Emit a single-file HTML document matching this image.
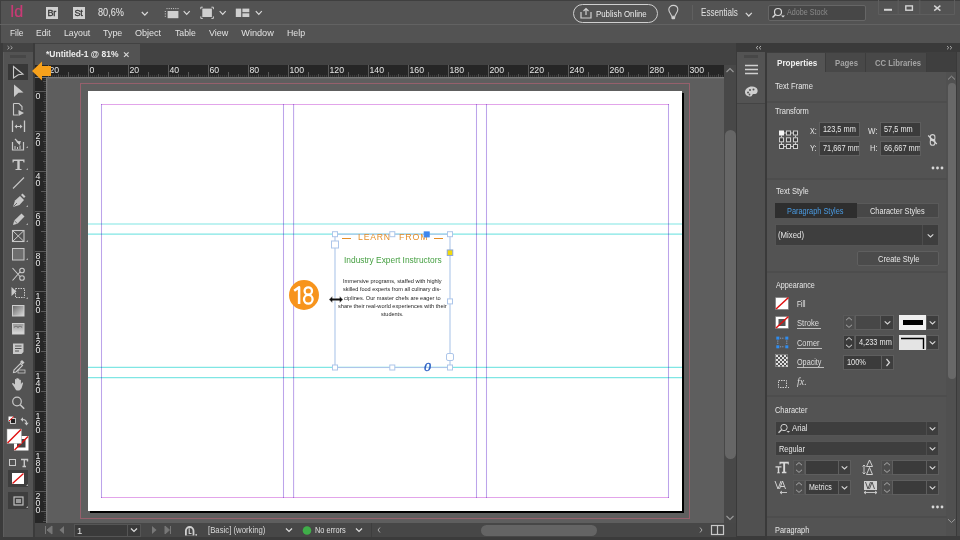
<!DOCTYPE html>
<html><head><meta charset="utf-8">
<style>
*{margin:0;padding:0;box-sizing:border-box}
html,body{width:960px;height:540px;overflow:hidden;background:#3a3a3a;font-family:"Liberation Sans",sans-serif;color:#e0e0e0;position:relative}
.a{position:absolute}
.t{position:absolute;white-space:nowrap;line-height:1}
.u{transform:scaleX(0.85);transform-origin:0 0}
svg{overflow:visible}
</style></head><body>
<div class="a" style="left:0;top:0;width:960px;height:25px;background:#535353;border-top:1px solid #3f3f3f;border-left:1px solid #3f3f3f"></div>
<div class="a" style="left:0;top:24px;width:960px;height:1px;background:#626262"></div>
<div class="a" style="left:0;top:25px;width:960px;height:18px;background:#535353;border-left:1px solid #3f3f3f"></div>
<div class="t" style="left:10px;top:4px;font-size:16px;font-weight:normal;color:#c93b76;letter-spacing:-0.2px;-webkit-text-stroke:0.2px #c93b76">Id</div>
<div class="a" style="left:46px;top:7px;width:12px;height:12px;background:#d0d0d0"></div>
<div class="t" style="left:47.5px;top:9px;font-size:9px;font-weight:normal;color:#333;letter-spacing:-0.2px;-webkit-text-stroke:0.3px #333">Br</div>
<div class="a" style="left:73px;top:7px;width:12px;height:12px;background:#d0d0d0"></div>
<div class="t" style="left:74.5px;top:9px;font-size:9px;font-weight:normal;color:#333;letter-spacing:-0.2px;-webkit-text-stroke:0.3px #333">St</div>
<div class="t" style="left:97.50px;top:8.14px;font-size:10.47px;font-weight:normal;color:#e8e8e8;font-family:'Liberation Sans';font-style:normal;transform:scaleX(0.876);transform-origin:0 0;">80,6%</div>
<svg class="a" style="left:0;top:0" width="960" height="30"><path d="M141.8,12L144.8,15.2L147.8,12" fill="none" stroke="#d8d8d8" stroke-width="1.2"/><path d="M183.7,11.2L186.7,14.399999999999999L189.7,11.2" fill="none" stroke="#d8d8d8" stroke-width="1.2"/><path d="M219.7,11.2L222.7,14.399999999999999L225.7,11.2" fill="none" stroke="#d8d8d8" stroke-width="1.2"/><path d="M255.8,11.2L258.8,14.399999999999999L261.8,11.2" fill="none" stroke="#d8d8d8" stroke-width="1.2"/><path d="M745.8,12.8L748.8,16.0L751.8,12.8" fill="none" stroke="#d8d8d8" stroke-width="1.2"/><rect x="167.6" y="11" width="10.8" height="7.2" fill="#cfcfcf"/><path d="M166.5,8.6H178.5" stroke="#cfcfcf" stroke-width="1" stroke-dasharray="1,1.2"/><path d="M165.3,11V18" stroke="#cfcfcf" stroke-width="1" stroke-dasharray="1,1.4"/><rect x="202.3" y="8.6" width="9.6" height="8.4" fill="#cfcfcf"/><path d="M200.8,9.2V7.2H202.8M211.4,7.2H213.4V9.2M213.4,16.4V18.4H211.4M202.8,18.4H200.8V16.4" fill="none" stroke="#cfcfcf" stroke-width="1"/><rect x="235.8" y="8.6" width="5.4" height="8.4" fill="#cfcfcf"/><rect x="242.4" y="8.6" width="6.9" height="3.6" fill="#cfcfcf"/><rect x="242.4" y="13.3" width="6.9" height="3.7" fill="#cfcfcf"/></svg>
<div class="a" style="left:573px;top:4px;width:85px;height:19px;border:1.3px solid #cfcfcf;border-radius:10px"></div>
<svg class="a" style="left:580px;top:7px" width="13" height="12"><path d="M1,5V11H11V5" fill="none" stroke="#d0d0d0" stroke-width="1.2"/><path d="M6,8V1.5M3.5,4L6,1.5L8.5,4" fill="none" stroke="#d0d0d0" stroke-width="1.2"/></svg>
<div class="t" style="left:595.80px;top:8.86px;font-size:9.74px;font-weight:normal;color:#ececec;font-family:'Liberation Sans';font-style:normal;transform:scaleX(0.807);transform-origin:0 0;">Publish Online</div>
<svg class="a" style="left:0;top:0" width="960" height="30"><path d="M671.6,16.2C671.4,14 668.8,12.6 668.8,9.6C668.8,7.1 670.8,5.4 673.3,5.4C675.8,5.4 677.8,7.1 677.8,9.6C677.8,12.6 675.2,14 675,16.2Z" fill="none" stroke="#cfcfcf" stroke-width="1.1"/><rect x="671.5" y="16.4" width="3.6" height="2.8" rx="0.8" fill="#cfcfcf"/></svg>
<div class="a" style="left:692px;top:5px;width:1px;height:15px;background:#606060"></div>
<div class="t" style="left:701.25px;top:7.81px;font-size:10.03px;font-weight:normal;color:#e0e0e0;font-family:'Liberation Sans';font-style:normal;transform:scaleX(0.807);transform-origin:0 0;">Essentials</div>
<div class="a" style="left:768px;top:5px;width:98px;height:16px;background:#474747;border:1px solid #666;border-radius:2px"></div>
<svg class="a" style="left:771px;top:7px" width="16" height="12"><circle cx="7" cy="5" r="3.5" fill="none" stroke="#d8d8d8" stroke-width="1.2"/><path d="M4.5,7.5L1.5,10.5" stroke="#d8d8d8" stroke-width="1.5"/><path d="M10,8.5h4l-2,2z" fill="#d8d8d8"/></svg>
<div class="t" style="left:787.00px;top:7.97px;font-size:9.01px;font-weight:normal;color:#8a8a8a;font-family:'Liberation Sans';font-style:normal;transform:scaleX(0.796);transform-origin:0 0;">Adobe Stock</div>
<svg class="a" style="left:0;top:0" width="960" height="30"><path d="M878.5,0V14.5H954.5V0M898.2,0V14.5M919.8,0V14.5" fill="none" stroke="#5e5e5e" stroke-width="1"/><rect x="884" y="8.8" width="8" height="2" fill="#d4d4d4"/><rect x="905.8" y="5.9" width="6.6" height="4.3" fill="none" stroke="#d4d4d4" stroke-width="1.4"/><path d="M934.2,5.6L940.4,10.6M940.4,5.6L934.2,10.6" stroke="#d4d4d4" stroke-width="1.4"/></svg>
<div class="t" style="left:9.60px;top:28.55px;font-size:9.16px;font-weight:normal;color:#e2e2e2;font-family:'Liberation Sans';font-style:normal;transform:scaleX(0.916);transform-origin:0 0;">File</div>
<div class="t" style="left:35.90px;top:28.55px;font-size:9.16px;font-weight:normal;color:#e2e2e2;font-family:'Liberation Sans';font-style:normal;transform:scaleX(0.924);transform-origin:0 0;">Edit</div>
<div class="t" style="left:63.50px;top:28.55px;font-size:9.16px;font-weight:normal;color:#e2e2e2;font-family:'Liberation Sans';font-style:normal;transform:scaleX(0.956);transform-origin:0 0;">Layout</div>
<div class="t" style="left:103.10px;top:28.55px;font-size:9.16px;font-weight:normal;color:#e2e2e2;font-family:'Liberation Sans';font-style:normal;transform:scaleX(0.971);transform-origin:0 0;">Type</div>
<div class="t" style="left:135.40px;top:28.55px;font-size:9.16px;font-weight:normal;color:#e2e2e2;font-family:'Liberation Sans';font-style:normal;transform:scaleX(0.986);transform-origin:0 0;">Object</div>
<div class="t" style="left:175.00px;top:28.55px;font-size:9.16px;font-weight:normal;color:#e2e2e2;font-family:'Liberation Sans';font-style:normal;transform:scaleX(0.950);transform-origin:0 0;">Table</div>
<div class="t" style="left:208.75px;top:28.55px;font-size:9.16px;font-weight:normal;color:#e2e2e2;font-family:'Liberation Sans';font-style:normal;transform:scaleX(0.983);transform-origin:0 0;">View</div>
<div class="t" style="left:241.25px;top:28.55px;font-size:9.16px;font-weight:normal;color:#e2e2e2;font-family:'Liberation Sans';font-style:normal;">Window</div>
<div class="t" style="left:286.90px;top:28.55px;font-size:9.16px;font-weight:normal;color:#e2e2e2;font-family:'Liberation Sans';font-style:normal;transform:scaleX(0.962);transform-origin:0 0;">Help</div>
<div class="a" style="left:0;top:43px;width:35px;height:497px;background:#3b3b3b"></div>
<div class="a" style="left:3px;top:43px;width:30px;height:9px;background:#434343"></div>
<svg class="a" style="left:0;top:0" width="40" height="60"><path d="M7.5,46L9.3,47.7L7.5,49.4M10.5,46L12.3,47.7L10.5,49.4" fill="none" stroke="#b0b0b0" stroke-width="0.9"/></svg>
<div class="a" style="left:3px;top:52px;width:30px;height:488px;background:#535353;border-left:1px solid #5d5d5d"></div>
<div class="a" style="left:10px;top:55px;width:16px;height:3px;background:#474747"></div>
<div class="a" style="left:8px;top:64px;width:20px;height:16px;background:#383838"></div>
<div class="a" style="left:8px;top:470px;width:20px;height:17px;background:#3e3e3e"></div>
<div class="a" style="left:8px;top:492px;width:20px;height:17px;background:#3e3e3e"></div>
<svg class="a" style="left:0;top:0" width="36" height="540"><path d="M13.5,66.5L23,74.2L18.3,74.8L13.5,78Z" fill="none" stroke="#c9c9c9" stroke-width="1.1"/><path d="M14,84.5L23.5,92.5L18.5,92.8L14,97Z" fill="#c9c9c9"/><path d="M13.5,103.5H19L22,106.5V110M13.5,103.5V115H18" fill="none" stroke="#c9c9c9" stroke-width="1.1"/><path d="M18.5,110V116L24,113Z" fill="#c9c9c9"/><path d="M12.5,120.5V132M24.5,120.5V132" stroke="#c9c9c9" stroke-width="1.3"/><path d="M15,126.5H22" stroke="#c9c9c9" stroke-width="1"/><path d="M14.5,126.5L17,124.5V128.5ZM22.5,126.5L20,124.5V128.5Z" fill="#c9c9c9"/><path d="M12.5,142V150H23.5V142" fill="none" stroke="#c9c9c9" stroke-width="1.2"/><path d="M15,139L20,144" stroke="#c9c9c9" stroke-width="1.2"/><path d="M19.5,145L21,141L16,141.5Z" fill="#c9c9c9"/><path d="M15,146V149M17.5,147V149M20,145.5V149" stroke="#c9c9c9" stroke-width="1"/><path d="M26,148L28,146V148Z" fill="#aaa"/><path d="M12.5,159.5H24.5V162.5H23.5L23,161H19.7V169H21.5V170H15.5V169H17.3V161H14L13.5,162.5H12.5Z" fill="#c9c9c9"/><path d="M26,170L28,168V170Z" fill="#aaa"/><path d="M13,188.5L24,177.5" stroke="#c9c9c9" stroke-width="1.1"/><path d="M13,207L15,200.5L20,196L24,200L19.5,205Z" fill="#c9c9c9"/><path d="M21,195L22.5,193.5L25.5,196.5L24,198Z" fill="#c9c9c9"/><path d="M13.5,206.5L17,203" stroke="#535353" stroke-width="0.8"/><path d="M26,207L28,205V207Z" fill="#aaa"/><path d="M13,225L14.2,220.5L21.5,213.5L24.5,216.5L17.5,223.8Z" fill="#c9c9c9"/><path d="M14.2,220.5L17.5,223.8" stroke="#535353" stroke-width="0.7"/><path d="M26,225L28,223V225Z" fill="#aaa"/><rect x="12.5" y="230.5" width="11.5" height="11" fill="none" stroke="#c9c9c9" stroke-width="1.1"/><path d="M12.5,230.5L24,241.5M24,230.5L12.5,241.5" stroke="#c9c9c9" stroke-width="1"/><path d="M26,242L28,240V242Z" fill="#aaa"/><rect x="12.5" y="248.5" width="11.5" height="11.5" fill="#6e6e6e" stroke="#c9c9c9" stroke-width="1"/><path d="M26,260L28,258V260Z" fill="#aaa"/><circle cx="22" cy="270.5" r="2.3" fill="none" stroke="#c9c9c9" stroke-width="1.1"/><circle cx="22" cy="278" r="2.3" fill="none" stroke="#c9c9c9" stroke-width="1.1"/><path d="M12.5,268L20,276.5M12.5,280.5L20,272" stroke="#c9c9c9" stroke-width="1.1"/><path d="M11.5,287V296L16.5,291.5Z" fill="#c9c9c9"/><rect x="15.5" y="288.5" width="9" height="9" fill="none" stroke="#c9c9c9" stroke-width="1" stroke-dasharray="1.5,1"/><path d="M26,299L28,297V299Z" fill="#aaa"/><defs><linearGradient id="g1" x1="0" y1="0" x2="1" y2="1"><stop offset="0" stop-color="#666"/><stop offset="1" stop-color="#ddd"/></linearGradient><linearGradient id="g2" x1="0" y1="0" x2="0" y2="1"><stop offset="0" stop-color="#999"/><stop offset="1" stop-color="#ddd"/></linearGradient></defs><rect x="12.5" y="305.5" width="11.5" height="10.5" fill="url(#g1)" stroke="#cfcfcf" stroke-width="1"/><rect x="12.5" y="323.5" width="11.5" height="10.5" fill="url(#g2)" stroke="#cfcfcf" stroke-width="1"/><path d="M14,327.5Q16,325 18,327.5Q20,325 22,327.5" fill="none" stroke="#777" stroke-width="1.2"/><path d="M13,343.5H23.5V352L21.5,354H13Z" fill="#c9c9c9"/><path d="M15,346H21.5M15,348.5H21.5M15,351H19" stroke="#535353" stroke-width="1"/><path d="M13.5,372.5L14,370L20.5,363.5L22.5,365.5L16,372Z" fill="none" stroke="#c9c9c9" stroke-width="1.1"/><path d="M20,362L22,360L24.5,362.5L22.5,364.5Z" fill="#c9c9c9"/><rect x="18" y="370" width="7" height="3" fill="none" stroke="#c9c9c9" stroke-width="0.8"/><path d="M14.5,387.5L12.3,384.2C11.8,383.4 12.6,382.6 13.4,383.2L15,384.6V379.8C15,378.9 16.4,378.9 16.4,379.8V383.5V378.6C16.4,377.7 17.9,377.7 17.9,378.6V383.5V379.1C17.9,378.2 19.4,378.2 19.4,379.1V383.8V380.3C19.4,379.5 20.9,379.5 20.9,380.3V384.5L21.6,383C22,382.2 23.3,382.6 23,383.5L21.8,387.5C21.2,389.5 19.8,390.6 18,390.6H17C16,390.6 15.2,389 14.5,387.5Z" fill="#c9c9c9"/><circle cx="17" cy="401.5" r="4.3" fill="none" stroke="#c9c9c9" stroke-width="1.2"/><path d="M20.2,404.8L24.2,408.8" stroke="#c9c9c9" stroke-width="1.6"/><rect x="8.5" y="416.5" width="5" height="5" fill="#fff"/><rect x="10.5" y="418.5" width="5" height="5" fill="#222" stroke="#eee" stroke-width="0.8"/><path d="M9,421L14,416.5" stroke="#e00" stroke-width="1"/><path d="M22.5,419.5C25,419.5 26.5,420.5 26.5,423" fill="none" stroke="#c9c9c9" stroke-width="1.1"/><path d="M20.5,419.5L23,417.3V421.7ZM26.5,425.5L24.3,422.8H28.7Z" fill="#c9c9c9"/><rect x="14" y="436" width="14.5" height="14.5" fill="#fff"/><rect x="17" y="439" width="8.5" height="8.5" fill="#444"/><path d="M14.5,450L28,436.5" stroke="#e01010" stroke-width="1.4"/><rect x="7" y="429" width="14.5" height="14.5" fill="#fff" stroke="#999" stroke-width="0.5"/><path d="M7.5,443L21,429.5" stroke="#e01010" stroke-width="1.4"/><rect x="9.5" y="459.5" width="6" height="6" fill="none" stroke="#c9c9c9" stroke-width="1"/><path d="M21,459.5H27.5V461.5M24.3,459.5V466.5M22.5,466.5H26" fill="none" stroke="#c9c9c9" stroke-width="1.4"/><rect x="12" y="473" width="12" height="11" fill="#fff"/><path d="M12.5,483.5L23.5,473.5" stroke="#e01010" stroke-width="1.3"/><path d="M26,486L28,484V486Z" fill="#aaa"/><rect x="14" y="497" width="9" height="8" fill="none" stroke="#c0c0c0" stroke-width="1.2"/><rect x="16" y="499" width="5" height="4" fill="#9a9a9a"/><path d="M26,508L28,506V508Z" fill="#aaa"/></svg>
<div class="a" style="left:35px;top:43px;width:701px;height:22px;background:#424242"></div>
<div class="a" style="left:35px;top:44px;width:105px;height:21px;background:#535353"></div>
<div class="t" style="left:46.00px;top:50.37px;font-size:9.01px;font-weight:bold;color:#ececec;font-family:'Liberation Sans';font-style:normal;transform:scaleX(0.944);transform-origin:0 0;">*Untitled-1 @ 81%</div>
<svg class="a" style="left:0;top:0" width="200" height="70"><path d="M124,52.3L128.6,56.8M128.6,52.3L124,56.8" stroke="#d8d8d8" stroke-width="1.15"/></svg>
<svg class="a" style="left:0;top:0" width="736" height="540"><rect x="35" y="65" width="689" height="12" fill="#262626"/><rect x="35" y="77" width="11" height="446" fill="#262626"/><rect x="35" y="77" width="689" height="1" fill="#787878"/><rect x="46" y="77" width="1" height="446" fill="#787878"/><rect x="48.0" y="65" width="1" height="12" fill="#5a5a5a"/><rect x="50.0" y="75" width="1" height="2" fill="#3c3c3c"/><rect x="52.0" y="75" width="1" height="2" fill="#3c3c3c"/><rect x="54.0" y="75" width="1" height="2" fill="#3c3c3c"/><rect x="56.0" y="75" width="1" height="2" fill="#3c3c3c"/><rect x="58.0" y="74" width="1" height="3" fill="#505050"/><rect x="60.0" y="75" width="1" height="2" fill="#3c3c3c"/><rect x="62.0" y="75" width="1" height="2" fill="#3c3c3c"/><rect x="64.0" y="75" width="1" height="2" fill="#3c3c3c"/><rect x="66.0" y="75" width="1" height="2" fill="#3c3c3c"/><rect x="68.0" y="72" width="1" height="5" fill="#5a5a5a"/><rect x="70.0" y="75" width="1" height="2" fill="#3c3c3c"/><rect x="72.0" y="75" width="1" height="2" fill="#3c3c3c"/><rect x="74.0" y="75" width="1" height="2" fill="#3c3c3c"/><rect x="76.0" y="75" width="1" height="2" fill="#3c3c3c"/><rect x="78.0" y="74" width="1" height="3" fill="#505050"/><rect x="80.0" y="75" width="1" height="2" fill="#3c3c3c"/><rect x="82.0" y="75" width="1" height="2" fill="#3c3c3c"/><rect x="84.0" y="75" width="1" height="2" fill="#3c3c3c"/><rect x="86.0" y="75" width="1" height="2" fill="#3c3c3c"/><rect x="88.0" y="65" width="1" height="12" fill="#5a5a5a"/><rect x="90.0" y="75" width="1" height="2" fill="#3c3c3c"/><rect x="92.0" y="75" width="1" height="2" fill="#3c3c3c"/><rect x="94.0" y="75" width="1" height="2" fill="#3c3c3c"/><rect x="96.0" y="75" width="1" height="2" fill="#3c3c3c"/><rect x="98.0" y="74" width="1" height="3" fill="#505050"/><rect x="100.0" y="75" width="1" height="2" fill="#3c3c3c"/><rect x="102.0" y="75" width="1" height="2" fill="#3c3c3c"/><rect x="104.0" y="75" width="1" height="2" fill="#3c3c3c"/><rect x="106.0" y="75" width="1" height="2" fill="#3c3c3c"/><rect x="108.0" y="72" width="1" height="5" fill="#5a5a5a"/><rect x="110.0" y="75" width="1" height="2" fill="#3c3c3c"/><rect x="112.0" y="75" width="1" height="2" fill="#3c3c3c"/><rect x="114.0" y="75" width="1" height="2" fill="#3c3c3c"/><rect x="116.0" y="75" width="1" height="2" fill="#3c3c3c"/><rect x="118.0" y="74" width="1" height="3" fill="#505050"/><rect x="120.0" y="75" width="1" height="2" fill="#3c3c3c"/><rect x="122.0" y="75" width="1" height="2" fill="#3c3c3c"/><rect x="124.0" y="75" width="1" height="2" fill="#3c3c3c"/><rect x="126.0" y="75" width="1" height="2" fill="#3c3c3c"/><rect x="128.0" y="65" width="1" height="12" fill="#5a5a5a"/><rect x="130.0" y="75" width="1" height="2" fill="#3c3c3c"/><rect x="132.0" y="75" width="1" height="2" fill="#3c3c3c"/><rect x="134.0" y="75" width="1" height="2" fill="#3c3c3c"/><rect x="136.0" y="75" width="1" height="2" fill="#3c3c3c"/><rect x="138.0" y="74" width="1" height="3" fill="#505050"/><rect x="140.0" y="75" width="1" height="2" fill="#3c3c3c"/><rect x="142.0" y="75" width="1" height="2" fill="#3c3c3c"/><rect x="144.0" y="75" width="1" height="2" fill="#3c3c3c"/><rect x="146.0" y="75" width="1" height="2" fill="#3c3c3c"/><rect x="148.0" y="72" width="1" height="5" fill="#5a5a5a"/><rect x="150.0" y="75" width="1" height="2" fill="#3c3c3c"/><rect x="152.0" y="75" width="1" height="2" fill="#3c3c3c"/><rect x="154.0" y="75" width="1" height="2" fill="#3c3c3c"/><rect x="156.0" y="75" width="1" height="2" fill="#3c3c3c"/><rect x="158.0" y="74" width="1" height="3" fill="#505050"/><rect x="160.0" y="75" width="1" height="2" fill="#3c3c3c"/><rect x="162.0" y="75" width="1" height="2" fill="#3c3c3c"/><rect x="164.0" y="75" width="1" height="2" fill="#3c3c3c"/><rect x="166.0" y="75" width="1" height="2" fill="#3c3c3c"/><rect x="168.0" y="65" width="1" height="12" fill="#5a5a5a"/><rect x="170.0" y="75" width="1" height="2" fill="#3c3c3c"/><rect x="172.0" y="75" width="1" height="2" fill="#3c3c3c"/><rect x="174.0" y="75" width="1" height="2" fill="#3c3c3c"/><rect x="176.0" y="75" width="1" height="2" fill="#3c3c3c"/><rect x="178.0" y="74" width="1" height="3" fill="#505050"/><rect x="180.0" y="75" width="1" height="2" fill="#3c3c3c"/><rect x="182.0" y="75" width="1" height="2" fill="#3c3c3c"/><rect x="184.0" y="75" width="1" height="2" fill="#3c3c3c"/><rect x="186.0" y="75" width="1" height="2" fill="#3c3c3c"/><rect x="188.0" y="72" width="1" height="5" fill="#5a5a5a"/><rect x="190.0" y="75" width="1" height="2" fill="#3c3c3c"/><rect x="192.0" y="75" width="1" height="2" fill="#3c3c3c"/><rect x="194.0" y="75" width="1" height="2" fill="#3c3c3c"/><rect x="196.0" y="75" width="1" height="2" fill="#3c3c3c"/><rect x="198.0" y="74" width="1" height="3" fill="#505050"/><rect x="200.0" y="75" width="1" height="2" fill="#3c3c3c"/><rect x="202.0" y="75" width="1" height="2" fill="#3c3c3c"/><rect x="204.0" y="75" width="1" height="2" fill="#3c3c3c"/><rect x="206.0" y="75" width="1" height="2" fill="#3c3c3c"/><rect x="208.0" y="65" width="1" height="12" fill="#5a5a5a"/><rect x="210.0" y="75" width="1" height="2" fill="#3c3c3c"/><rect x="212.0" y="75" width="1" height="2" fill="#3c3c3c"/><rect x="214.0" y="75" width="1" height="2" fill="#3c3c3c"/><rect x="216.0" y="75" width="1" height="2" fill="#3c3c3c"/><rect x="218.0" y="74" width="1" height="3" fill="#505050"/><rect x="220.0" y="75" width="1" height="2" fill="#3c3c3c"/><rect x="222.0" y="75" width="1" height="2" fill="#3c3c3c"/><rect x="224.0" y="75" width="1" height="2" fill="#3c3c3c"/><rect x="226.0" y="75" width="1" height="2" fill="#3c3c3c"/><rect x="228.0" y="72" width="1" height="5" fill="#5a5a5a"/><rect x="230.0" y="75" width="1" height="2" fill="#3c3c3c"/><rect x="232.0" y="75" width="1" height="2" fill="#3c3c3c"/><rect x="234.0" y="75" width="1" height="2" fill="#3c3c3c"/><rect x="236.0" y="75" width="1" height="2" fill="#3c3c3c"/><rect x="238.0" y="74" width="1" height="3" fill="#505050"/><rect x="240.0" y="75" width="1" height="2" fill="#3c3c3c"/><rect x="242.0" y="75" width="1" height="2" fill="#3c3c3c"/><rect x="244.0" y="75" width="1" height="2" fill="#3c3c3c"/><rect x="246.0" y="75" width="1" height="2" fill="#3c3c3c"/><rect x="248.0" y="65" width="1" height="12" fill="#5a5a5a"/><rect x="250.0" y="75" width="1" height="2" fill="#3c3c3c"/><rect x="252.0" y="75" width="1" height="2" fill="#3c3c3c"/><rect x="254.0" y="75" width="1" height="2" fill="#3c3c3c"/><rect x="256.0" y="75" width="1" height="2" fill="#3c3c3c"/><rect x="258.0" y="74" width="1" height="3" fill="#505050"/><rect x="260.0" y="75" width="1" height="2" fill="#3c3c3c"/><rect x="262.0" y="75" width="1" height="2" fill="#3c3c3c"/><rect x="264.0" y="75" width="1" height="2" fill="#3c3c3c"/><rect x="266.0" y="75" width="1" height="2" fill="#3c3c3c"/><rect x="268.0" y="72" width="1" height="5" fill="#5a5a5a"/><rect x="270.0" y="75" width="1" height="2" fill="#3c3c3c"/><rect x="272.0" y="75" width="1" height="2" fill="#3c3c3c"/><rect x="274.0" y="75" width="1" height="2" fill="#3c3c3c"/><rect x="276.0" y="75" width="1" height="2" fill="#3c3c3c"/><rect x="278.0" y="74" width="1" height="3" fill="#505050"/><rect x="280.0" y="75" width="1" height="2" fill="#3c3c3c"/><rect x="282.0" y="75" width="1" height="2" fill="#3c3c3c"/><rect x="284.0" y="75" width="1" height="2" fill="#3c3c3c"/><rect x="286.0" y="75" width="1" height="2" fill="#3c3c3c"/><rect x="288.0" y="65" width="1" height="12" fill="#5a5a5a"/><rect x="290.0" y="75" width="1" height="2" fill="#3c3c3c"/><rect x="292.0" y="75" width="1" height="2" fill="#3c3c3c"/><rect x="294.0" y="75" width="1" height="2" fill="#3c3c3c"/><rect x="296.0" y="75" width="1" height="2" fill="#3c3c3c"/><rect x="298.0" y="74" width="1" height="3" fill="#505050"/><rect x="300.0" y="75" width="1" height="2" fill="#3c3c3c"/><rect x="302.0" y="75" width="1" height="2" fill="#3c3c3c"/><rect x="304.0" y="75" width="1" height="2" fill="#3c3c3c"/><rect x="306.0" y="75" width="1" height="2" fill="#3c3c3c"/><rect x="308.0" y="72" width="1" height="5" fill="#5a5a5a"/><rect x="310.0" y="75" width="1" height="2" fill="#3c3c3c"/><rect x="312.0" y="75" width="1" height="2" fill="#3c3c3c"/><rect x="314.0" y="75" width="1" height="2" fill="#3c3c3c"/><rect x="316.0" y="75" width="1" height="2" fill="#3c3c3c"/><rect x="318.0" y="74" width="1" height="3" fill="#505050"/><rect x="320.0" y="75" width="1" height="2" fill="#3c3c3c"/><rect x="322.0" y="75" width="1" height="2" fill="#3c3c3c"/><rect x="324.0" y="75" width="1" height="2" fill="#3c3c3c"/><rect x="326.0" y="75" width="1" height="2" fill="#3c3c3c"/><rect x="328.0" y="65" width="1" height="12" fill="#5a5a5a"/><rect x="330.0" y="75" width="1" height="2" fill="#3c3c3c"/><rect x="332.0" y="75" width="1" height="2" fill="#3c3c3c"/><rect x="334.0" y="75" width="1" height="2" fill="#3c3c3c"/><rect x="336.0" y="75" width="1" height="2" fill="#3c3c3c"/><rect x="338.0" y="74" width="1" height="3" fill="#505050"/><rect x="340.0" y="75" width="1" height="2" fill="#3c3c3c"/><rect x="342.0" y="75" width="1" height="2" fill="#3c3c3c"/><rect x="344.0" y="75" width="1" height="2" fill="#3c3c3c"/><rect x="346.0" y="75" width="1" height="2" fill="#3c3c3c"/><rect x="348.0" y="72" width="1" height="5" fill="#5a5a5a"/><rect x="350.0" y="75" width="1" height="2" fill="#3c3c3c"/><rect x="352.0" y="75" width="1" height="2" fill="#3c3c3c"/><rect x="354.0" y="75" width="1" height="2" fill="#3c3c3c"/><rect x="356.0" y="75" width="1" height="2" fill="#3c3c3c"/><rect x="358.0" y="74" width="1" height="3" fill="#505050"/><rect x="360.0" y="75" width="1" height="2" fill="#3c3c3c"/><rect x="362.0" y="75" width="1" height="2" fill="#3c3c3c"/><rect x="364.0" y="75" width="1" height="2" fill="#3c3c3c"/><rect x="366.0" y="75" width="1" height="2" fill="#3c3c3c"/><rect x="368.0" y="65" width="1" height="12" fill="#5a5a5a"/><rect x="370.0" y="75" width="1" height="2" fill="#3c3c3c"/><rect x="372.0" y="75" width="1" height="2" fill="#3c3c3c"/><rect x="374.0" y="75" width="1" height="2" fill="#3c3c3c"/><rect x="376.0" y="75" width="1" height="2" fill="#3c3c3c"/><rect x="378.0" y="74" width="1" height="3" fill="#505050"/><rect x="380.0" y="75" width="1" height="2" fill="#3c3c3c"/><rect x="382.0" y="75" width="1" height="2" fill="#3c3c3c"/><rect x="384.0" y="75" width="1" height="2" fill="#3c3c3c"/><rect x="386.0" y="75" width="1" height="2" fill="#3c3c3c"/><rect x="388.0" y="72" width="1" height="5" fill="#5a5a5a"/><rect x="390.0" y="75" width="1" height="2" fill="#3c3c3c"/><rect x="392.0" y="75" width="1" height="2" fill="#3c3c3c"/><rect x="394.0" y="75" width="1" height="2" fill="#3c3c3c"/><rect x="396.0" y="75" width="1" height="2" fill="#3c3c3c"/><rect x="398.0" y="74" width="1" height="3" fill="#505050"/><rect x="400.0" y="75" width="1" height="2" fill="#3c3c3c"/><rect x="402.0" y="75" width="1" height="2" fill="#3c3c3c"/><rect x="404.0" y="75" width="1" height="2" fill="#3c3c3c"/><rect x="406.0" y="75" width="1" height="2" fill="#3c3c3c"/><rect x="408.0" y="65" width="1" height="12" fill="#5a5a5a"/><rect x="410.0" y="75" width="1" height="2" fill="#3c3c3c"/><rect x="412.0" y="75" width="1" height="2" fill="#3c3c3c"/><rect x="414.0" y="75" width="1" height="2" fill="#3c3c3c"/><rect x="416.0" y="75" width="1" height="2" fill="#3c3c3c"/><rect x="418.0" y="74" width="1" height="3" fill="#505050"/><rect x="420.0" y="75" width="1" height="2" fill="#3c3c3c"/><rect x="422.0" y="75" width="1" height="2" fill="#3c3c3c"/><rect x="424.0" y="75" width="1" height="2" fill="#3c3c3c"/><rect x="426.0" y="75" width="1" height="2" fill="#3c3c3c"/><rect x="428.0" y="72" width="1" height="5" fill="#5a5a5a"/><rect x="430.0" y="75" width="1" height="2" fill="#3c3c3c"/><rect x="432.0" y="75" width="1" height="2" fill="#3c3c3c"/><rect x="434.0" y="75" width="1" height="2" fill="#3c3c3c"/><rect x="436.0" y="75" width="1" height="2" fill="#3c3c3c"/><rect x="438.0" y="74" width="1" height="3" fill="#505050"/><rect x="440.0" y="75" width="1" height="2" fill="#3c3c3c"/><rect x="442.0" y="75" width="1" height="2" fill="#3c3c3c"/><rect x="444.0" y="75" width="1" height="2" fill="#3c3c3c"/><rect x="446.0" y="75" width="1" height="2" fill="#3c3c3c"/><rect x="448.0" y="65" width="1" height="12" fill="#5a5a5a"/><rect x="450.0" y="75" width="1" height="2" fill="#3c3c3c"/><rect x="452.0" y="75" width="1" height="2" fill="#3c3c3c"/><rect x="454.0" y="75" width="1" height="2" fill="#3c3c3c"/><rect x="456.0" y="75" width="1" height="2" fill="#3c3c3c"/><rect x="458.0" y="74" width="1" height="3" fill="#505050"/><rect x="460.0" y="75" width="1" height="2" fill="#3c3c3c"/><rect x="462.0" y="75" width="1" height="2" fill="#3c3c3c"/><rect x="464.0" y="75" width="1" height="2" fill="#3c3c3c"/><rect x="466.0" y="75" width="1" height="2" fill="#3c3c3c"/><rect x="468.0" y="72" width="1" height="5" fill="#5a5a5a"/><rect x="470.0" y="75" width="1" height="2" fill="#3c3c3c"/><rect x="472.0" y="75" width="1" height="2" fill="#3c3c3c"/><rect x="474.0" y="75" width="1" height="2" fill="#3c3c3c"/><rect x="476.0" y="75" width="1" height="2" fill="#3c3c3c"/><rect x="478.0" y="74" width="1" height="3" fill="#505050"/><rect x="480.0" y="75" width="1" height="2" fill="#3c3c3c"/><rect x="482.0" y="75" width="1" height="2" fill="#3c3c3c"/><rect x="484.0" y="75" width="1" height="2" fill="#3c3c3c"/><rect x="486.0" y="75" width="1" height="2" fill="#3c3c3c"/><rect x="488.0" y="65" width="1" height="12" fill="#5a5a5a"/><rect x="490.0" y="75" width="1" height="2" fill="#3c3c3c"/><rect x="492.0" y="75" width="1" height="2" fill="#3c3c3c"/><rect x="494.0" y="75" width="1" height="2" fill="#3c3c3c"/><rect x="496.0" y="75" width="1" height="2" fill="#3c3c3c"/><rect x="498.0" y="74" width="1" height="3" fill="#505050"/><rect x="500.0" y="75" width="1" height="2" fill="#3c3c3c"/><rect x="502.0" y="75" width="1" height="2" fill="#3c3c3c"/><rect x="504.0" y="75" width="1" height="2" fill="#3c3c3c"/><rect x="506.0" y="75" width="1" height="2" fill="#3c3c3c"/><rect x="508.0" y="72" width="1" height="5" fill="#5a5a5a"/><rect x="510.0" y="75" width="1" height="2" fill="#3c3c3c"/><rect x="512.0" y="75" width="1" height="2" fill="#3c3c3c"/><rect x="514.0" y="75" width="1" height="2" fill="#3c3c3c"/><rect x="516.0" y="75" width="1" height="2" fill="#3c3c3c"/><rect x="518.0" y="74" width="1" height="3" fill="#505050"/><rect x="520.0" y="75" width="1" height="2" fill="#3c3c3c"/><rect x="522.0" y="75" width="1" height="2" fill="#3c3c3c"/><rect x="524.0" y="75" width="1" height="2" fill="#3c3c3c"/><rect x="526.0" y="75" width="1" height="2" fill="#3c3c3c"/><rect x="528.0" y="65" width="1" height="12" fill="#5a5a5a"/><rect x="530.0" y="75" width="1" height="2" fill="#3c3c3c"/><rect x="532.0" y="75" width="1" height="2" fill="#3c3c3c"/><rect x="534.0" y="75" width="1" height="2" fill="#3c3c3c"/><rect x="536.0" y="75" width="1" height="2" fill="#3c3c3c"/><rect x="538.0" y="74" width="1" height="3" fill="#505050"/><rect x="540.0" y="75" width="1" height="2" fill="#3c3c3c"/><rect x="542.0" y="75" width="1" height="2" fill="#3c3c3c"/><rect x="544.0" y="75" width="1" height="2" fill="#3c3c3c"/><rect x="546.0" y="75" width="1" height="2" fill="#3c3c3c"/><rect x="548.0" y="72" width="1" height="5" fill="#5a5a5a"/><rect x="550.0" y="75" width="1" height="2" fill="#3c3c3c"/><rect x="552.0" y="75" width="1" height="2" fill="#3c3c3c"/><rect x="554.0" y="75" width="1" height="2" fill="#3c3c3c"/><rect x="556.0" y="75" width="1" height="2" fill="#3c3c3c"/><rect x="558.0" y="74" width="1" height="3" fill="#505050"/><rect x="560.0" y="75" width="1" height="2" fill="#3c3c3c"/><rect x="562.0" y="75" width="1" height="2" fill="#3c3c3c"/><rect x="564.0" y="75" width="1" height="2" fill="#3c3c3c"/><rect x="566.0" y="75" width="1" height="2" fill="#3c3c3c"/><rect x="568.0" y="65" width="1" height="12" fill="#5a5a5a"/><rect x="570.0" y="75" width="1" height="2" fill="#3c3c3c"/><rect x="572.0" y="75" width="1" height="2" fill="#3c3c3c"/><rect x="574.0" y="75" width="1" height="2" fill="#3c3c3c"/><rect x="576.0" y="75" width="1" height="2" fill="#3c3c3c"/><rect x="578.0" y="74" width="1" height="3" fill="#505050"/><rect x="580.0" y="75" width="1" height="2" fill="#3c3c3c"/><rect x="582.0" y="75" width="1" height="2" fill="#3c3c3c"/><rect x="584.0" y="75" width="1" height="2" fill="#3c3c3c"/><rect x="586.0" y="75" width="1" height="2" fill="#3c3c3c"/><rect x="588.0" y="72" width="1" height="5" fill="#5a5a5a"/><rect x="590.0" y="75" width="1" height="2" fill="#3c3c3c"/><rect x="592.0" y="75" width="1" height="2" fill="#3c3c3c"/><rect x="594.0" y="75" width="1" height="2" fill="#3c3c3c"/><rect x="596.0" y="75" width="1" height="2" fill="#3c3c3c"/><rect x="598.0" y="74" width="1" height="3" fill="#505050"/><rect x="600.0" y="75" width="1" height="2" fill="#3c3c3c"/><rect x="602.0" y="75" width="1" height="2" fill="#3c3c3c"/><rect x="604.0" y="75" width="1" height="2" fill="#3c3c3c"/><rect x="606.0" y="75" width="1" height="2" fill="#3c3c3c"/><rect x="608.0" y="65" width="1" height="12" fill="#5a5a5a"/><rect x="610.0" y="75" width="1" height="2" fill="#3c3c3c"/><rect x="612.0" y="75" width="1" height="2" fill="#3c3c3c"/><rect x="614.0" y="75" width="1" height="2" fill="#3c3c3c"/><rect x="616.0" y="75" width="1" height="2" fill="#3c3c3c"/><rect x="618.0" y="74" width="1" height="3" fill="#505050"/><rect x="620.0" y="75" width="1" height="2" fill="#3c3c3c"/><rect x="622.0" y="75" width="1" height="2" fill="#3c3c3c"/><rect x="624.0" y="75" width="1" height="2" fill="#3c3c3c"/><rect x="626.0" y="75" width="1" height="2" fill="#3c3c3c"/><rect x="628.0" y="72" width="1" height="5" fill="#5a5a5a"/><rect x="630.0" y="75" width="1" height="2" fill="#3c3c3c"/><rect x="632.0" y="75" width="1" height="2" fill="#3c3c3c"/><rect x="634.0" y="75" width="1" height="2" fill="#3c3c3c"/><rect x="636.0" y="75" width="1" height="2" fill="#3c3c3c"/><rect x="638.0" y="74" width="1" height="3" fill="#505050"/><rect x="640.0" y="75" width="1" height="2" fill="#3c3c3c"/><rect x="642.0" y="75" width="1" height="2" fill="#3c3c3c"/><rect x="644.0" y="75" width="1" height="2" fill="#3c3c3c"/><rect x="646.0" y="75" width="1" height="2" fill="#3c3c3c"/><rect x="648.0" y="65" width="1" height="12" fill="#5a5a5a"/><rect x="650.0" y="75" width="1" height="2" fill="#3c3c3c"/><rect x="652.0" y="75" width="1" height="2" fill="#3c3c3c"/><rect x="654.0" y="75" width="1" height="2" fill="#3c3c3c"/><rect x="656.0" y="75" width="1" height="2" fill="#3c3c3c"/><rect x="658.0" y="74" width="1" height="3" fill="#505050"/><rect x="660.0" y="75" width="1" height="2" fill="#3c3c3c"/><rect x="662.0" y="75" width="1" height="2" fill="#3c3c3c"/><rect x="664.0" y="75" width="1" height="2" fill="#3c3c3c"/><rect x="666.0" y="75" width="1" height="2" fill="#3c3c3c"/><rect x="668.0" y="72" width="1" height="5" fill="#5a5a5a"/><rect x="670.0" y="75" width="1" height="2" fill="#3c3c3c"/><rect x="672.0" y="75" width="1" height="2" fill="#3c3c3c"/><rect x="674.0" y="75" width="1" height="2" fill="#3c3c3c"/><rect x="676.0" y="75" width="1" height="2" fill="#3c3c3c"/><rect x="678.0" y="74" width="1" height="3" fill="#505050"/><rect x="680.0" y="75" width="1" height="2" fill="#3c3c3c"/><rect x="682.0" y="75" width="1" height="2" fill="#3c3c3c"/><rect x="684.0" y="75" width="1" height="2" fill="#3c3c3c"/><rect x="686.0" y="75" width="1" height="2" fill="#3c3c3c"/><rect x="688.0" y="65" width="1" height="12" fill="#5a5a5a"/><rect x="690.0" y="75" width="1" height="2" fill="#3c3c3c"/><rect x="692.0" y="75" width="1" height="2" fill="#3c3c3c"/><rect x="694.0" y="75" width="1" height="2" fill="#3c3c3c"/><rect x="696.0" y="75" width="1" height="2" fill="#3c3c3c"/><rect x="698.0" y="74" width="1" height="3" fill="#505050"/><rect x="700.0" y="75" width="1" height="2" fill="#3c3c3c"/><rect x="702.0" y="75" width="1" height="2" fill="#3c3c3c"/><rect x="704.0" y="75" width="1" height="2" fill="#3c3c3c"/><rect x="706.0" y="75" width="1" height="2" fill="#3c3c3c"/><rect x="708.0" y="72" width="1" height="5" fill="#5a5a5a"/><rect x="710.0" y="75" width="1" height="2" fill="#3c3c3c"/><rect x="712.0" y="75" width="1" height="2" fill="#3c3c3c"/><rect x="714.0" y="75" width="1" height="2" fill="#3c3c3c"/><rect x="716.0" y="75" width="1" height="2" fill="#3c3c3c"/><rect x="718.0" y="74" width="1" height="3" fill="#505050"/><rect x="720.0" y="75" width="1" height="2" fill="#3c3c3c"/><rect x="722.0" y="75" width="1" height="2" fill="#3c3c3c"/><text x="49.5" y="73" font-size="8.7" fill="#e6e6e6" font-family="Liberation Sans">20</text><text x="89.5" y="73" font-size="8.7" fill="#e6e6e6" font-family="Liberation Sans">0</text><text x="129.5" y="73" font-size="8.7" fill="#e6e6e6" font-family="Liberation Sans">20</text><text x="169.5" y="73" font-size="8.7" fill="#e6e6e6" font-family="Liberation Sans">40</text><text x="209.5" y="73" font-size="8.7" fill="#e6e6e6" font-family="Liberation Sans">60</text><text x="249.5" y="73" font-size="8.7" fill="#e6e6e6" font-family="Liberation Sans">80</text><text x="289.5" y="73" font-size="8.7" fill="#e6e6e6" font-family="Liberation Sans">100</text><text x="329.5" y="73" font-size="8.7" fill="#e6e6e6" font-family="Liberation Sans">120</text><text x="369.5" y="73" font-size="8.7" fill="#e6e6e6" font-family="Liberation Sans">140</text><text x="409.5" y="73" font-size="8.7" fill="#e6e6e6" font-family="Liberation Sans">160</text><text x="449.5" y="73" font-size="8.7" fill="#e6e6e6" font-family="Liberation Sans">180</text><text x="489.5" y="73" font-size="8.7" fill="#e6e6e6" font-family="Liberation Sans">200</text><text x="529.5" y="73" font-size="8.7" fill="#e6e6e6" font-family="Liberation Sans">220</text><text x="569.5" y="73" font-size="8.7" fill="#e6e6e6" font-family="Liberation Sans">240</text><text x="609.5" y="73" font-size="8.7" fill="#e6e6e6" font-family="Liberation Sans">260</text><text x="649.5" y="73" font-size="8.7" fill="#e6e6e6" font-family="Liberation Sans">280</text><text x="689.5" y="73" font-size="8.7" fill="#e6e6e6" font-family="Liberation Sans">300</text><rect x="44" y="79.0" width="2" height="1" fill="#3c3c3c"/><rect x="43" y="81.0" width="3" height="1" fill="#505050"/><rect x="44" y="83.0" width="2" height="1" fill="#3c3c3c"/><rect x="44" y="85.0" width="2" height="1" fill="#3c3c3c"/><rect x="44" y="87.0" width="2" height="1" fill="#3c3c3c"/><rect x="44" y="89.0" width="2" height="1" fill="#3c3c3c"/><rect x="35" y="91.0" width="11" height="1" fill="#5a5a5a"/><rect x="44" y="93.0" width="2" height="1" fill="#3c3c3c"/><rect x="44" y="95.0" width="2" height="1" fill="#3c3c3c"/><rect x="44" y="97.0" width="2" height="1" fill="#3c3c3c"/><rect x="44" y="99.0" width="2" height="1" fill="#3c3c3c"/><rect x="43" y="101.0" width="3" height="1" fill="#505050"/><rect x="44" y="103.0" width="2" height="1" fill="#3c3c3c"/><rect x="44" y="105.0" width="2" height="1" fill="#3c3c3c"/><rect x="44" y="107.0" width="2" height="1" fill="#3c3c3c"/><rect x="44" y="109.0" width="2" height="1" fill="#3c3c3c"/><rect x="41" y="111.0" width="5" height="1" fill="#5a5a5a"/><rect x="44" y="113.0" width="2" height="1" fill="#3c3c3c"/><rect x="44" y="115.0" width="2" height="1" fill="#3c3c3c"/><rect x="44" y="117.0" width="2" height="1" fill="#3c3c3c"/><rect x="44" y="119.0" width="2" height="1" fill="#3c3c3c"/><rect x="43" y="121.0" width="3" height="1" fill="#505050"/><rect x="44" y="123.0" width="2" height="1" fill="#3c3c3c"/><rect x="44" y="125.0" width="2" height="1" fill="#3c3c3c"/><rect x="44" y="127.0" width="2" height="1" fill="#3c3c3c"/><rect x="44" y="129.0" width="2" height="1" fill="#3c3c3c"/><rect x="35" y="131.0" width="11" height="1" fill="#5a5a5a"/><rect x="44" y="133.0" width="2" height="1" fill="#3c3c3c"/><rect x="44" y="135.0" width="2" height="1" fill="#3c3c3c"/><rect x="44" y="137.0" width="2" height="1" fill="#3c3c3c"/><rect x="44" y="139.0" width="2" height="1" fill="#3c3c3c"/><rect x="43" y="141.0" width="3" height="1" fill="#505050"/><rect x="44" y="143.0" width="2" height="1" fill="#3c3c3c"/><rect x="44" y="145.0" width="2" height="1" fill="#3c3c3c"/><rect x="44" y="147.0" width="2" height="1" fill="#3c3c3c"/><rect x="44" y="149.0" width="2" height="1" fill="#3c3c3c"/><rect x="41" y="151.0" width="5" height="1" fill="#5a5a5a"/><rect x="44" y="153.0" width="2" height="1" fill="#3c3c3c"/><rect x="44" y="155.0" width="2" height="1" fill="#3c3c3c"/><rect x="44" y="157.0" width="2" height="1" fill="#3c3c3c"/><rect x="44" y="159.0" width="2" height="1" fill="#3c3c3c"/><rect x="43" y="161.0" width="3" height="1" fill="#505050"/><rect x="44" y="163.0" width="2" height="1" fill="#3c3c3c"/><rect x="44" y="165.0" width="2" height="1" fill="#3c3c3c"/><rect x="44" y="167.0" width="2" height="1" fill="#3c3c3c"/><rect x="44" y="169.0" width="2" height="1" fill="#3c3c3c"/><rect x="35" y="171.0" width="11" height="1" fill="#5a5a5a"/><rect x="44" y="173.0" width="2" height="1" fill="#3c3c3c"/><rect x="44" y="175.0" width="2" height="1" fill="#3c3c3c"/><rect x="44" y="177.0" width="2" height="1" fill="#3c3c3c"/><rect x="44" y="179.0" width="2" height="1" fill="#3c3c3c"/><rect x="43" y="181.0" width="3" height="1" fill="#505050"/><rect x="44" y="183.0" width="2" height="1" fill="#3c3c3c"/><rect x="44" y="185.0" width="2" height="1" fill="#3c3c3c"/><rect x="44" y="187.0" width="2" height="1" fill="#3c3c3c"/><rect x="44" y="189.0" width="2" height="1" fill="#3c3c3c"/><rect x="41" y="191.0" width="5" height="1" fill="#5a5a5a"/><rect x="44" y="193.0" width="2" height="1" fill="#3c3c3c"/><rect x="44" y="195.0" width="2" height="1" fill="#3c3c3c"/><rect x="44" y="197.0" width="2" height="1" fill="#3c3c3c"/><rect x="44" y="199.0" width="2" height="1" fill="#3c3c3c"/><rect x="43" y="201.0" width="3" height="1" fill="#505050"/><rect x="44" y="203.0" width="2" height="1" fill="#3c3c3c"/><rect x="44" y="205.0" width="2" height="1" fill="#3c3c3c"/><rect x="44" y="207.0" width="2" height="1" fill="#3c3c3c"/><rect x="44" y="209.0" width="2" height="1" fill="#3c3c3c"/><rect x="35" y="211.0" width="11" height="1" fill="#5a5a5a"/><rect x="44" y="213.0" width="2" height="1" fill="#3c3c3c"/><rect x="44" y="215.0" width="2" height="1" fill="#3c3c3c"/><rect x="44" y="217.0" width="2" height="1" fill="#3c3c3c"/><rect x="44" y="219.0" width="2" height="1" fill="#3c3c3c"/><rect x="43" y="221.0" width="3" height="1" fill="#505050"/><rect x="44" y="223.0" width="2" height="1" fill="#3c3c3c"/><rect x="44" y="225.0" width="2" height="1" fill="#3c3c3c"/><rect x="44" y="227.0" width="2" height="1" fill="#3c3c3c"/><rect x="44" y="229.0" width="2" height="1" fill="#3c3c3c"/><rect x="41" y="231.0" width="5" height="1" fill="#5a5a5a"/><rect x="44" y="233.0" width="2" height="1" fill="#3c3c3c"/><rect x="44" y="235.0" width="2" height="1" fill="#3c3c3c"/><rect x="44" y="237.0" width="2" height="1" fill="#3c3c3c"/><rect x="44" y="239.0" width="2" height="1" fill="#3c3c3c"/><rect x="43" y="241.0" width="3" height="1" fill="#505050"/><rect x="44" y="243.0" width="2" height="1" fill="#3c3c3c"/><rect x="44" y="245.0" width="2" height="1" fill="#3c3c3c"/><rect x="44" y="247.0" width="2" height="1" fill="#3c3c3c"/><rect x="44" y="249.0" width="2" height="1" fill="#3c3c3c"/><rect x="35" y="251.0" width="11" height="1" fill="#5a5a5a"/><rect x="44" y="253.0" width="2" height="1" fill="#3c3c3c"/><rect x="44" y="255.0" width="2" height="1" fill="#3c3c3c"/><rect x="44" y="257.0" width="2" height="1" fill="#3c3c3c"/><rect x="44" y="259.0" width="2" height="1" fill="#3c3c3c"/><rect x="43" y="261.0" width="3" height="1" fill="#505050"/><rect x="44" y="263.0" width="2" height="1" fill="#3c3c3c"/><rect x="44" y="265.0" width="2" height="1" fill="#3c3c3c"/><rect x="44" y="267.0" width="2" height="1" fill="#3c3c3c"/><rect x="44" y="269.0" width="2" height="1" fill="#3c3c3c"/><rect x="41" y="271.0" width="5" height="1" fill="#5a5a5a"/><rect x="44" y="273.0" width="2" height="1" fill="#3c3c3c"/><rect x="44" y="275.0" width="2" height="1" fill="#3c3c3c"/><rect x="44" y="277.0" width="2" height="1" fill="#3c3c3c"/><rect x="44" y="279.0" width="2" height="1" fill="#3c3c3c"/><rect x="43" y="281.0" width="3" height="1" fill="#505050"/><rect x="44" y="283.0" width="2" height="1" fill="#3c3c3c"/><rect x="44" y="285.0" width="2" height="1" fill="#3c3c3c"/><rect x="44" y="287.0" width="2" height="1" fill="#3c3c3c"/><rect x="44" y="289.0" width="2" height="1" fill="#3c3c3c"/><rect x="35" y="291.0" width="11" height="1" fill="#5a5a5a"/><rect x="44" y="293.0" width="2" height="1" fill="#3c3c3c"/><rect x="44" y="295.0" width="2" height="1" fill="#3c3c3c"/><rect x="44" y="297.0" width="2" height="1" fill="#3c3c3c"/><rect x="44" y="299.0" width="2" height="1" fill="#3c3c3c"/><rect x="43" y="301.0" width="3" height="1" fill="#505050"/><rect x="44" y="303.0" width="2" height="1" fill="#3c3c3c"/><rect x="44" y="305.0" width="2" height="1" fill="#3c3c3c"/><rect x="44" y="307.0" width="2" height="1" fill="#3c3c3c"/><rect x="44" y="309.0" width="2" height="1" fill="#3c3c3c"/><rect x="41" y="311.0" width="5" height="1" fill="#5a5a5a"/><rect x="44" y="313.0" width="2" height="1" fill="#3c3c3c"/><rect x="44" y="315.0" width="2" height="1" fill="#3c3c3c"/><rect x="44" y="317.0" width="2" height="1" fill="#3c3c3c"/><rect x="44" y="319.0" width="2" height="1" fill="#3c3c3c"/><rect x="43" y="321.0" width="3" height="1" fill="#505050"/><rect x="44" y="323.0" width="2" height="1" fill="#3c3c3c"/><rect x="44" y="325.0" width="2" height="1" fill="#3c3c3c"/><rect x="44" y="327.0" width="2" height="1" fill="#3c3c3c"/><rect x="44" y="329.0" width="2" height="1" fill="#3c3c3c"/><rect x="35" y="331.0" width="11" height="1" fill="#5a5a5a"/><rect x="44" y="333.0" width="2" height="1" fill="#3c3c3c"/><rect x="44" y="335.0" width="2" height="1" fill="#3c3c3c"/><rect x="44" y="337.0" width="2" height="1" fill="#3c3c3c"/><rect x="44" y="339.0" width="2" height="1" fill="#3c3c3c"/><rect x="43" y="341.0" width="3" height="1" fill="#505050"/><rect x="44" y="343.0" width="2" height="1" fill="#3c3c3c"/><rect x="44" y="345.0" width="2" height="1" fill="#3c3c3c"/><rect x="44" y="347.0" width="2" height="1" fill="#3c3c3c"/><rect x="44" y="349.0" width="2" height="1" fill="#3c3c3c"/><rect x="41" y="351.0" width="5" height="1" fill="#5a5a5a"/><rect x="44" y="353.0" width="2" height="1" fill="#3c3c3c"/><rect x="44" y="355.0" width="2" height="1" fill="#3c3c3c"/><rect x="44" y="357.0" width="2" height="1" fill="#3c3c3c"/><rect x="44" y="359.0" width="2" height="1" fill="#3c3c3c"/><rect x="43" y="361.0" width="3" height="1" fill="#505050"/><rect x="44" y="363.0" width="2" height="1" fill="#3c3c3c"/><rect x="44" y="365.0" width="2" height="1" fill="#3c3c3c"/><rect x="44" y="367.0" width="2" height="1" fill="#3c3c3c"/><rect x="44" y="369.0" width="2" height="1" fill="#3c3c3c"/><rect x="35" y="371.0" width="11" height="1" fill="#5a5a5a"/><rect x="44" y="373.0" width="2" height="1" fill="#3c3c3c"/><rect x="44" y="375.0" width="2" height="1" fill="#3c3c3c"/><rect x="44" y="377.0" width="2" height="1" fill="#3c3c3c"/><rect x="44" y="379.0" width="2" height="1" fill="#3c3c3c"/><rect x="43" y="381.0" width="3" height="1" fill="#505050"/><rect x="44" y="383.0" width="2" height="1" fill="#3c3c3c"/><rect x="44" y="385.0" width="2" height="1" fill="#3c3c3c"/><rect x="44" y="387.0" width="2" height="1" fill="#3c3c3c"/><rect x="44" y="389.0" width="2" height="1" fill="#3c3c3c"/><rect x="41" y="391.0" width="5" height="1" fill="#5a5a5a"/><rect x="44" y="393.0" width="2" height="1" fill="#3c3c3c"/><rect x="44" y="395.0" width="2" height="1" fill="#3c3c3c"/><rect x="44" y="397.0" width="2" height="1" fill="#3c3c3c"/><rect x="44" y="399.0" width="2" height="1" fill="#3c3c3c"/><rect x="43" y="401.0" width="3" height="1" fill="#505050"/><rect x="44" y="403.0" width="2" height="1" fill="#3c3c3c"/><rect x="44" y="405.0" width="2" height="1" fill="#3c3c3c"/><rect x="44" y="407.0" width="2" height="1" fill="#3c3c3c"/><rect x="44" y="409.0" width="2" height="1" fill="#3c3c3c"/><rect x="35" y="411.0" width="11" height="1" fill="#5a5a5a"/><rect x="44" y="413.0" width="2" height="1" fill="#3c3c3c"/><rect x="44" y="415.0" width="2" height="1" fill="#3c3c3c"/><rect x="44" y="417.0" width="2" height="1" fill="#3c3c3c"/><rect x="44" y="419.0" width="2" height="1" fill="#3c3c3c"/><rect x="43" y="421.0" width="3" height="1" fill="#505050"/><rect x="44" y="423.0" width="2" height="1" fill="#3c3c3c"/><rect x="44" y="425.0" width="2" height="1" fill="#3c3c3c"/><rect x="44" y="427.0" width="2" height="1" fill="#3c3c3c"/><rect x="44" y="429.0" width="2" height="1" fill="#3c3c3c"/><rect x="41" y="431.0" width="5" height="1" fill="#5a5a5a"/><rect x="44" y="433.0" width="2" height="1" fill="#3c3c3c"/><rect x="44" y="435.0" width="2" height="1" fill="#3c3c3c"/><rect x="44" y="437.0" width="2" height="1" fill="#3c3c3c"/><rect x="44" y="439.0" width="2" height="1" fill="#3c3c3c"/><rect x="43" y="441.0" width="3" height="1" fill="#505050"/><rect x="44" y="443.0" width="2" height="1" fill="#3c3c3c"/><rect x="44" y="445.0" width="2" height="1" fill="#3c3c3c"/><rect x="44" y="447.0" width="2" height="1" fill="#3c3c3c"/><rect x="44" y="449.0" width="2" height="1" fill="#3c3c3c"/><rect x="35" y="451.0" width="11" height="1" fill="#5a5a5a"/><rect x="44" y="453.0" width="2" height="1" fill="#3c3c3c"/><rect x="44" y="455.0" width="2" height="1" fill="#3c3c3c"/><rect x="44" y="457.0" width="2" height="1" fill="#3c3c3c"/><rect x="44" y="459.0" width="2" height="1" fill="#3c3c3c"/><rect x="43" y="461.0" width="3" height="1" fill="#505050"/><rect x="44" y="463.0" width="2" height="1" fill="#3c3c3c"/><rect x="44" y="465.0" width="2" height="1" fill="#3c3c3c"/><rect x="44" y="467.0" width="2" height="1" fill="#3c3c3c"/><rect x="44" y="469.0" width="2" height="1" fill="#3c3c3c"/><rect x="41" y="471.0" width="5" height="1" fill="#5a5a5a"/><rect x="44" y="473.0" width="2" height="1" fill="#3c3c3c"/><rect x="44" y="475.0" width="2" height="1" fill="#3c3c3c"/><rect x="44" y="477.0" width="2" height="1" fill="#3c3c3c"/><rect x="44" y="479.0" width="2" height="1" fill="#3c3c3c"/><rect x="43" y="481.0" width="3" height="1" fill="#505050"/><rect x="44" y="483.0" width="2" height="1" fill="#3c3c3c"/><rect x="44" y="485.0" width="2" height="1" fill="#3c3c3c"/><rect x="44" y="487.0" width="2" height="1" fill="#3c3c3c"/><rect x="44" y="489.0" width="2" height="1" fill="#3c3c3c"/><rect x="35" y="491.0" width="11" height="1" fill="#5a5a5a"/><rect x="44" y="493.0" width="2" height="1" fill="#3c3c3c"/><rect x="44" y="495.0" width="2" height="1" fill="#3c3c3c"/><rect x="44" y="497.0" width="2" height="1" fill="#3c3c3c"/><rect x="44" y="499.0" width="2" height="1" fill="#3c3c3c"/><rect x="43" y="501.0" width="3" height="1" fill="#505050"/><rect x="44" y="503.0" width="2" height="1" fill="#3c3c3c"/><rect x="44" y="505.0" width="2" height="1" fill="#3c3c3c"/><rect x="44" y="507.0" width="2" height="1" fill="#3c3c3c"/><rect x="44" y="509.0" width="2" height="1" fill="#3c3c3c"/><rect x="41" y="511.0" width="5" height="1" fill="#5a5a5a"/><rect x="44" y="513.0" width="2" height="1" fill="#3c3c3c"/><rect x="44" y="515.0" width="2" height="1" fill="#3c3c3c"/><rect x="44" y="517.0" width="2" height="1" fill="#3c3c3c"/><rect x="44" y="519.0" width="2" height="1" fill="#3c3c3c"/><rect x="43" y="521.0" width="3" height="1" fill="#505050"/><text x="35.6" y="98.7" font-size="8.8" fill="#e8e8e8" font-family="Liberation Sans">0</text><text x="35.6" y="138.7" font-size="8.8" fill="#e8e8e8" font-family="Liberation Sans">2</text><text x="35.6" y="145.7" font-size="8.8" fill="#e8e8e8" font-family="Liberation Sans">0</text><text x="35.6" y="178.7" font-size="8.8" fill="#e8e8e8" font-family="Liberation Sans">4</text><text x="35.6" y="185.7" font-size="8.8" fill="#e8e8e8" font-family="Liberation Sans">0</text><text x="35.6" y="218.7" font-size="8.8" fill="#e8e8e8" font-family="Liberation Sans">6</text><text x="35.6" y="225.7" font-size="8.8" fill="#e8e8e8" font-family="Liberation Sans">0</text><text x="35.6" y="258.7" font-size="8.8" fill="#e8e8e8" font-family="Liberation Sans">8</text><text x="35.6" y="265.7" font-size="8.8" fill="#e8e8e8" font-family="Liberation Sans">0</text><text x="35.6" y="298.7" font-size="8.8" fill="#e8e8e8" font-family="Liberation Sans">1</text><text x="35.6" y="305.7" font-size="8.8" fill="#e8e8e8" font-family="Liberation Sans">0</text><text x="35.6" y="312.7" font-size="8.8" fill="#e8e8e8" font-family="Liberation Sans">0</text><text x="35.6" y="338.7" font-size="8.8" fill="#e8e8e8" font-family="Liberation Sans">1</text><text x="35.6" y="345.7" font-size="8.8" fill="#e8e8e8" font-family="Liberation Sans">2</text><text x="35.6" y="352.7" font-size="8.8" fill="#e8e8e8" font-family="Liberation Sans">0</text><text x="35.6" y="378.7" font-size="8.8" fill="#e8e8e8" font-family="Liberation Sans">1</text><text x="35.6" y="385.7" font-size="8.8" fill="#e8e8e8" font-family="Liberation Sans">4</text><text x="35.6" y="392.7" font-size="8.8" fill="#e8e8e8" font-family="Liberation Sans">0</text><text x="35.6" y="418.7" font-size="8.8" fill="#e8e8e8" font-family="Liberation Sans">1</text><text x="35.6" y="425.7" font-size="8.8" fill="#e8e8e8" font-family="Liberation Sans">6</text><text x="35.6" y="432.7" font-size="8.8" fill="#e8e8e8" font-family="Liberation Sans">0</text><text x="35.6" y="458.7" font-size="8.8" fill="#e8e8e8" font-family="Liberation Sans">1</text><text x="35.6" y="465.7" font-size="8.8" fill="#e8e8e8" font-family="Liberation Sans">8</text><text x="35.6" y="472.7" font-size="8.8" fill="#e8e8e8" font-family="Liberation Sans">0</text><text x="35.6" y="498.7" font-size="8.8" fill="#e8e8e8" font-family="Liberation Sans">2</text><text x="35.6" y="505.7" font-size="8.8" fill="#e8e8e8" font-family="Liberation Sans">0</text><text x="35.6" y="512.7" font-size="8.8" fill="#e8e8e8" font-family="Liberation Sans">0</text></svg>
<div class="a" style="left:47px;top:78px;width:677px;height:445px;background:#5e5e5e;border-top:1px solid #666;border-left:1px solid #646464"></div>
<div class="a" style="left:724px;top:65px;width:12px;height:458px;background:#484848"></div>
<div class="a" style="left:724.5px;top:130px;width:11px;height:329px;background:#666;border-radius:5.5px"></div>
<svg class="a" style="left:725px;top:67px" width="10" height="6"><path d="M1.5,5L5,1.5L8.5,5" fill="none" stroke="#9a9a9a" stroke-width="1.1"/></svg>
<svg class="a" style="left:725px;top:515px" width="10" height="6"><path d="M1.5,1L5,4.5L8.5,1" fill="none" stroke="#9a9a9a" stroke-width="1.1"/></svg>
<div class="a" style="left:35px;top:523px;width:701px;height:14px;background:#474747"></div>
<div class="a" style="left:0;top:537px;width:736px;height:3px;background:#3b3b3b"></div>
<div class="a" style="left:371px;top:523px;width:1px;height:14px;background:#3e3e3e"></div>
<div class="a" style="left:481px;top:525px;width:116px;height:11px;background:#646464;border-radius:5.5px"></div>
<div class="a" style="left:74px;top:524px;width:67px;height:13px;background:#3a3a3a;border:1px solid #555"></div>
<div class="a" style="left:127px;top:524px;width:1px;height:13px;background:#555"></div>
<div class="t" style="left:77px;top:526px;font-size:9.5px;color:#e0e0e0">1</div>
<svg class="a" style="left:0;top:0" width="736" height="540"><path d="M45.5,526V534M52,526L47,530L52,534Z" fill="#777" stroke="#777" stroke-width="1"/><path d="M64,526L59.5,530L64,534Z" fill="#777"/><path d="M131,528.5L134,531.5L137,528.5" fill="none" stroke="#ddd" stroke-width="1.2"/><path d="M152,526L156.5,530L152,534Z" fill="#777"/><path d="M165,526L169.5,530L165,534ZM170.5,526V534" fill="#777" stroke="#777" stroke-width="1"/><path d="M185,535.5V530.8A4.7,4.7 0 0 1 194.4,530.8V535.5Z" fill="#d0d0d0"/><path d="M186.8,535.5V530.8A2.9,2.9 0 0 1 192.6,530.8V535.5Z" fill="#474747"/><path d="M189.2,528.2V533.5H191.5" fill="none" stroke="#d0d0d0" stroke-width="1.1"/><circle cx="196.2" cy="534.8" r="0.9" fill="#d0d0d0"/><path d="M286,528.5L289,531.5L292,528.5" fill="none" stroke="#ddd" stroke-width="1.2"/><circle cx="307" cy="530.5" r="4.3" fill="#3fae49"/><path d="M356,528.5L359,531.5L362,528.5" fill="none" stroke="#ddd" stroke-width="1.2"/><path d="M380,527.5L378,530L380,532.5" fill="none" stroke="#aaa" stroke-width="1"/><path d="M700,527.5L702,530L700,532.5" fill="none" stroke="#aaa" stroke-width="1"/><rect x="711.5" y="525.5" width="12" height="9" fill="none" stroke="#c8c8c8" stroke-width="1.2"/><path d="M717.5,525.5V534.5" stroke="#c8c8c8" stroke-width="1.2"/></svg>
<div class="t" style="left:208.30px;top:526.12px;font-size:9.30px;font-weight:normal;color:#d8d8d8;font-family:'Liberation Sans';font-style:normal;transform:scaleX(0.836);transform-origin:0 0;">[Basic] (working)</div>
<div class="t" style="left:315.00px;top:526.12px;font-size:9.30px;font-weight:normal;color:#e0e0e0;font-family:'Liberation Sans';font-style:normal;transform:scaleX(0.794);transform-origin:0 0;">No errors</div>
<div class="a" style="left:80px;top:83px;width:610px;height:436px;border:1px solid #96606c"></div>
<div class="a" style="left:88px;top:91px;width:594px;height:420px;background:#fff;box-shadow:2px 2px 0 #000"></div>
<svg class="a" style="left:0;top:0;mix-blend-mode:multiply" width="960" height="540"><path d="M88,224.0H682" stroke="#80e6e4" stroke-width="1.2" style="mix-blend-mode:multiply"/><path d="M88,234.2H682" stroke="#80e6e4" stroke-width="1.2" style="mix-blend-mode:multiply"/><path d="M88,367.3H682" stroke="#80e6e4" stroke-width="1.2" style="mix-blend-mode:multiply"/><path d="M88,377.6H682" stroke="#80e6e4" stroke-width="1.2" style="mix-blend-mode:multiply"/><path d="M101,104.5H669M101,497.5H669" stroke="#e2a4ea" stroke-width="1.1" style="mix-blend-mode:multiply"/><path d="M101.5,104V498" stroke="#bca4ea" stroke-width="1.05" style="mix-blend-mode:multiply"/><path d="M283.5,104V498" stroke="#bca4ea" stroke-width="1.05" style="mix-blend-mode:multiply"/><path d="M293.6,104V498" stroke="#bca4ea" stroke-width="1.05" style="mix-blend-mode:multiply"/><path d="M476.5,104V498" stroke="#bca4ea" stroke-width="1.05" style="mix-blend-mode:multiply"/><path d="M486.5,104V498" stroke="#bca4ea" stroke-width="1.05" style="mix-blend-mode:multiply"/><path d="M668.5,104V498" stroke="#bca4ea" stroke-width="1.05" style="mix-blend-mode:multiply"/></svg>
<svg class="a" style="left:0;top:0" width="960" height="540"><rect x="335" y="234.2" width="115" height="133.3" fill="none" stroke="#adc6ea" stroke-width="1.1"/></svg>
<div class="a" style="left:342.3px;top:237.7px;width:9.2px;height:1.2px;background:#e48e28"></div>
<div class="a" style="left:433.9px;top:237.7px;width:9.2px;height:1.2px;background:#e48e28"></div>
<div class="t" style="left:358.30px;top:233.22px;font-size:8.72px;font-weight:normal;color:#e48e28;font-family:'Liberation Sans';font-style:normal;letter-spacing:0.85px;transform:scaleX(0.988);transform-origin:0 0;">LEARN</div>
<div class="t" style="left:399.00px;top:233.22px;font-size:8.72px;font-weight:normal;color:#e48e28;font-family:'Liberation Sans';font-style:normal;letter-spacing:0.85px;transform:scaleX(1.013);transform-origin:0 0;">FROM</div>
<div class="t" style="left:343.50px;top:255.62px;font-size:8.72px;font-weight:normal;color:#47a043;font-family:'Liberation Sans';font-style:normal;transform:scaleX(0.960);transform-origin:0 0;">Industry Expert Instructors</div>
<div class="t" style="left:343.10px;top:278.13px;font-size:6.10px;font-weight:normal;color:#1e1e1e;font-family:'Liberation Sans';font-style:normal;transform:scaleX(0.920);transform-origin:0 0;">Immersive programs, staffed with highly</div>
<div class="t" style="left:343.10px;top:286.43px;font-size:6.10px;font-weight:normal;color:#1e1e1e;font-family:'Liberation Sans';font-style:normal;transform:scaleX(0.907);transform-origin:0 0;">skilled food experts from all culinary dis-</div>
<div class="t" style="left:344.40px;top:294.73px;font-size:6.10px;font-weight:normal;color:#1e1e1e;font-family:'Liberation Sans';font-style:normal;transform:scaleX(0.921);transform-origin:0 0;">ciplines. Our master chefs are eager to</div>
<div class="t" style="left:338.10px;top:303.03px;font-size:6.10px;font-weight:normal;color:#1e1e1e;font-family:'Liberation Sans';font-style:normal;transform:scaleX(0.922);transform-origin:0 0;">share their real-world experiences with their</div>
<div class="t" style="left:381.25px;top:311.33px;font-size:6.10px;font-weight:normal;color:#1e1e1e;font-family:'Liberation Sans';font-style:normal;transform:scaleX(0.908);transform-origin:0 0;">students.</div>
<svg class="a" style="left:0;top:0" width="960" height="540"><rect x="332.50" y="231.70" width="5" height="5" rx="0" fill="#fff" stroke="#adc6ea" stroke-width="1"/><rect x="389.80" y="231.70" width="5" height="5" rx="0" fill="#fff" stroke="#adc6ea" stroke-width="1"/><rect x="447.50" y="231.70" width="5" height="5" rx="0" fill="#fff" stroke="#adc6ea" stroke-width="1"/><rect x="447.50" y="298.90" width="5" height="5" rx="0" fill="#fff" stroke="#adc6ea" stroke-width="1"/><rect x="332.50" y="365.00" width="5" height="5" rx="0" fill="#fff" stroke="#adc6ea" stroke-width="1"/><rect x="389.80" y="365.00" width="5" height="5" rx="0" fill="#fff" stroke="#adc6ea" stroke-width="1"/><rect x="447.50" y="365.00" width="5" height="5" rx="0" fill="#fff" stroke="#adc6ea" stroke-width="1"/><rect x="331.50" y="241.00" width="7" height="7" rx="0" fill="#fff" stroke="#adc6ea" stroke-width="1"/><rect x="446.50" y="353.50" width="7" height="7" rx="1.5" fill="#fff" stroke="#adc6ea" stroke-width="1"/><rect x="424.20" y="231.90" width="5" height="5" rx="0" fill="#3c86ee" stroke="#3c86ee" stroke-width="1"/><rect x="447.25" y="249.95" width="5.5" height="5.5" rx="0" fill="#f2d90a" stroke="#8aa6d8" stroke-width="1"/></svg>
<div class="t" style="left:423.60px;top:360.76px;font-size:12.21px;font-weight:normal;color:#2a5fc4;font-family:'Liberation Serif';font-style:italic;transform:scaleX(1.147);transform-origin:0 0;-webkit-text-stroke:0.35px #2a5fc4">0</div>
<svg class="a" style="left:328px;top:295px" width="16" height="9"><path d="M1,4.5L4.5,1V3.2H11.5V1L15,4.5L11.5,8V5.8H4.5V8Z" fill="#111" stroke="#fff" stroke-width="0.5"/></svg>
<div class="a" style="left:289px;top:280.2px;width:30px;height:30px;border-radius:50%;background:#f7941d"></div>
<svg class="a" style="left:0;top:0" width="960" height="540"><path d="M299.1,304V287.2L294.2,290.8" fill="none" stroke="#fff" stroke-width="2.5" stroke-linejoin="round"/><ellipse cx="308.3" cy="291" rx="3.7" ry="3.65" fill="none" stroke="#fff" stroke-width="2.3"/><ellipse cx="308.3" cy="299.3" rx="4.3" ry="4.4" fill="none" stroke="#fff" stroke-width="2.3"/></svg>
<svg class="a" style="left:30px;top:60px" width="24" height="22"><path d="M2,11L12,1.5V6H21V16H12V20.5Z" fill="#f7a11b"/></svg>
<div class="a" style="left:736px;top:43px;width:224px;height:497px;background:#3a3a3a"></div>
<div class="a" style="left:736px;top:43px;width:31px;height:9px;background:#3a3a3a"></div>
<svg class="a" style="left:0;top:0" width="960" height="540"><path d="M758,46L756.2,47.7L758,49.4M761,46L759.2,47.7L761,49.4" fill="none" stroke="#c0c0c0" stroke-width="0.9"/><path d="M947,46L948.8,47.7L947,49.4M950,46L951.8,47.7L950,49.4" fill="none" stroke="#b0b0b0" stroke-width="0.9"/></svg>
<div class="a" style="left:737px;top:52px;width:28px;height:51px;background:#535353"></div>
<div class="a" style="left:737px;top:103px;width:28px;height:433px;background:#505050"></div><div class="a" style="left:737px;top:103px;width:28px;height:1px;background:#444"></div>
<div class="a" style="left:744px;top:55px;width:14px;height:3px;background:#474747"></div>
<svg class="a" style="left:744px;top:64px" width="16" height="12"><path d="M1,1.5H14M1,5.5H14M1,9.5H14" stroke="#d0d0d0" stroke-width="1.6"/></svg>
<svg class="a" style="left:744px;top:85px" width="16" height="13"><path d="M8,1.5C4,1.5 1,4 1,7C1,10 3.5,11.5 6.5,11.5C8,11.5 8,10 8.5,9.5C9.5,8.5 11,9.5 12.5,8.5C14.5,7 14.5,1.5 8,1.5Z" fill="#d0d0d0"/><circle cx="4" cy="7.5" r="1" fill="#535353"/><circle cx="6" cy="5" r="1" fill="#535353"/><circle cx="9.5" cy="4.5" r="1" fill="#535353"/><circle cx="5.5" cy="9.5" r="0.9" fill="#535353"/></svg>
<div class="a" style="left:767px;top:52px;width:189px;height:484px;background:#535353"></div>
<div class="a" style="left:767px;top:52px;width:189px;height:20px;background:#3f3f3f"></div>
<div class="a" style="left:767px;top:53px;width:58px;height:19px;background:#535353"></div>
<div class="a" style="left:825px;top:53px;width:40px;height:19px;background:#484848;border-left:1px solid #3d3d3d"></div>
<div class="a" style="left:865px;top:53px;width:62px;height:19px;background:#484848;border-left:1px solid #3d3d3d;border-right:1px solid #3d3d3d"></div>
<div class="t" style="left:777.10px;top:58.92px;font-size:8.72px;font-weight:bold;color:#f0f0f0;font-family:'Liberation Sans';font-style:normal;transform:scaleX(0.934);transform-origin:0 0;">Properties</div>
<div class="t" style="left:834.60px;top:58.92px;font-size:8.72px;font-weight:bold;color:#a4a4a4;font-family:'Liberation Sans';font-style:normal;transform:scaleX(0.896);transform-origin:0 0;">Pages</div>
<div class="t" style="left:874.80px;top:58.92px;font-size:8.72px;font-weight:bold;color:#a4a4a4;font-family:'Liberation Sans';font-style:normal;transform:scaleX(0.887);transform-origin:0 0;">CC Libraries</div>
<div class="a" style="left:946px;top:72px;width:10px;height:464px;background:#505050"></div>
<div class="a" style="left:947.5px;top:83px;width:8.5px;height:296px;background:#686868;border-radius:4.25px"></div>
<svg class="a" style="left:947px;top:75px" width="9" height="6"><path d="M1,4.5L4.5,1.2L8,4.5" fill="none" stroke="#999" stroke-width="1"/></svg>
<svg class="a" style="left:947px;top:518px" width="9" height="6"><path d="M1,1.2L4.5,4.5L8,1.2" fill="none" stroke="#999" stroke-width="1"/></svg>
<div class="a" style="left:767px;top:100.5px;width:180px;height:2px;background:#4d4d4d"></div>
<div class="a" style="left:767px;top:177.5px;width:180px;height:2px;background:#4d4d4d"></div>
<div class="a" style="left:767px;top:270.5px;width:180px;height:2px;background:#4d4d4d"></div>
<div class="a" style="left:767px;top:394.5px;width:180px;height:2px;background:#4d4d4d"></div>
<div class="a" style="left:767px;top:515.5px;width:180px;height:2px;background:#4d4d4d"></div>
<div class="t" style="left:775.40px;top:81.52px;font-size:8.72px;font-weight:normal;color:#e6e6e6;font-family:'Liberation Sans';font-style:normal;transform:scaleX(0.869);transform-origin:0 0;">Text Frame</div>
<div class="t" style="left:775.40px;top:106.92px;font-size:8.72px;font-weight:normal;color:#e6e6e6;font-family:'Liberation Sans';font-style:normal;transform:scaleX(0.857);transform-origin:0 0;">Transform</div>
<div class="t" style="left:775.80px;top:187.29px;font-size:8.87px;font-weight:normal;color:#e6e6e6;font-family:'Liberation Sans';font-style:normal;transform:scaleX(0.853);transform-origin:0 0;">Text Style</div>
<div class="t" style="left:775.60px;top:281.12px;font-size:8.72px;font-weight:normal;color:#e6e6e6;font-family:'Liberation Sans';font-style:normal;transform:scaleX(0.825);transform-origin:0 0;">Appearance</div>
<div class="t" style="left:775.20px;top:405.82px;font-size:8.72px;font-weight:normal;color:#e6e6e6;font-family:'Liberation Sans';font-style:normal;transform:scaleX(0.846);transform-origin:0 0;">Character</div>
<div class="t" style="left:775.20px;top:525.62px;font-size:8.72px;font-weight:normal;color:#e6e6e6;font-family:'Liberation Sans';font-style:normal;transform:scaleX(0.840);transform-origin:0 0;">Paragraph</div>
<svg class="a" style="left:0;top:0" width="960" height="540"><path d="M784,133H786M791,133H793M781.5,135.5V137.3M795.5,135.5V137.3M781.5,142.3V144M795.5,142.3V144M784,146.5H786M791,146.5H793" stroke="#c8c8c8" stroke-width="1"/><rect x="779" y="130.5" width="5" height="5" fill="#f4f4f4"/><rect x="786.5" y="131.0" width="4" height="4" fill="#3a3a3a" stroke="#cfcfcf" stroke-width="1"/><rect x="793.5" y="131.0" width="4" height="4" fill="#3a3a3a" stroke="#cfcfcf" stroke-width="1"/><rect x="779.5" y="137.8" width="4" height="4" fill="#3a3a3a" stroke="#cfcfcf" stroke-width="1"/><rect x="786.5" y="137.8" width="4" height="4" fill="#3a3a3a" stroke="#cfcfcf" stroke-width="1"/><rect x="793.5" y="137.8" width="4" height="4" fill="#3a3a3a" stroke="#cfcfcf" stroke-width="1"/><rect x="779.5" y="144.5" width="4" height="4" fill="#3a3a3a" stroke="#cfcfcf" stroke-width="1"/><rect x="786.5" y="144.5" width="4" height="4" fill="#3a3a3a" stroke="#cfcfcf" stroke-width="1"/><rect x="793.5" y="144.5" width="4" height="4" fill="#3a3a3a" stroke="#cfcfcf" stroke-width="1"/></svg>
<div class="t" style="left:809.70px;top:126.66px;font-size:8.43px;font-weight:normal;color:#e0e0e0;font-family:'Liberation Sans';font-style:normal;transform:scaleX(0.841);transform-origin:0 0;">X:</div>
<div class="t" style="left:809.70px;top:144.16px;font-size:8.43px;font-weight:normal;color:#e0e0e0;font-family:'Liberation Sans';font-style:normal;transform:scaleX(0.893);transform-origin:0 0;">Y:</div>
<div class="t" style="left:868.00px;top:126.66px;font-size:8.43px;font-weight:normal;color:#e0e0e0;font-family:'Liberation Sans';font-style:normal;transform:scaleX(0.935);transform-origin:0 0;">W:</div>
<div class="t" style="left:869.80px;top:144.16px;font-size:8.43px;font-weight:normal;color:#e0e0e0;font-family:'Liberation Sans';font-style:normal;transform:scaleX(0.913);transform-origin:0 0;">H:</div>
<div class="a" style="left:819px;top:122px;width:41px;height:15px;background:#3b3b3b;border:1px solid #5e5e5e"></div><div class="a" style="left:820px;top:123px;width:39px;height:13px;overflow:hidden"><div class="t" style="left:2.80px;top:1.74px;font-size:8.58px;font-weight:normal;color:#e8e8e8;font-family:'Liberation Sans';font-style:normal;transform:scaleX(0.86);transform-origin:0 0">123,5 mm</div></div>
<div class="a" style="left:819px;top:141px;width:41px;height:15px;background:#3b3b3b;border:1px solid #5e5e5e"></div><div class="a" style="left:820px;top:142px;width:39px;height:13px;overflow:hidden"><div class="t" style="left:2.80px;top:1.74px;font-size:8.58px;font-weight:normal;color:#e8e8e8;font-family:'Liberation Sans';font-style:normal;transform:scaleX(0.86);transform-origin:0 0">71,667 mm</div></div>
<div class="a" style="left:880px;top:122px;width:41px;height:15px;background:#3b3b3b;border:1px solid #5e5e5e"></div><div class="a" style="left:881px;top:123px;width:39px;height:13px;overflow:hidden"><div class="t" style="left:2.80px;top:1.74px;font-size:8.58px;font-weight:normal;color:#e8e8e8;font-family:'Liberation Sans';font-style:normal;transform:scaleX(0.86);transform-origin:0 0">57,5 mm</div></div>
<div class="a" style="left:880px;top:141px;width:41px;height:15px;background:#3b3b3b;border:1px solid #5e5e5e"></div><div class="a" style="left:881px;top:142px;width:39px;height:13px;overflow:hidden"><div class="t" style="left:2.80px;top:1.74px;font-size:8.58px;font-weight:normal;color:#e8e8e8;font-family:'Liberation Sans';font-style:normal;transform:scaleX(0.86);transform-origin:0 0">66,667 mm</div></div>
<svg class="a" style="left:0;top:0" width="960" height="540"><rect x="930.3" y="134.6" width="4.6" height="6" rx="2.3" fill="none" stroke="#cfcfcf" stroke-width="1.1"/><rect x="930.3" y="139.2" width="4.6" height="6" rx="2.3" fill="none" stroke="#cfcfcf" stroke-width="1.1"/><path d="M928.2,135.5L936.8,144" stroke="#d8d8d8" stroke-width="1.2"/></svg>
<svg class="a" style="left:931px;top:166px" width="14" height="4"><circle cx="2" cy="2" r="1.4" fill="#d8d8d8"/><circle cx="6.5" cy="2" r="1.4" fill="#d8d8d8"/><circle cx="11" cy="2" r="1.4" fill="#d8d8d8"/></svg>
<svg class="a" style="left:931px;top:505px" width="14" height="4"><circle cx="2" cy="2" r="1.4" fill="#d8d8d8"/><circle cx="6.5" cy="2" r="1.4" fill="#d8d8d8"/><circle cx="11" cy="2" r="1.4" fill="#d8d8d8"/></svg>
<div class="a" style="left:775px;top:203px;width:164px;height:15px;background:#474747;border:1px solid #5a5a5a"></div>
<div class="a" style="left:775px;top:203px;width:82px;height:15px;background:#2e2e2e"></div>
<div class="t" style="left:787.30px;top:206.82px;font-size:8.72px;font-weight:normal;color:#4a9be2;font-family:'Liberation Sans';font-style:normal;transform:scaleX(0.845);transform-origin:0 0;">Paragraph Styles</div>
<div class="t" style="left:870.20px;top:206.82px;font-size:8.72px;font-weight:normal;color:#e6e6e6;font-family:'Liberation Sans';font-style:normal;transform:scaleX(0.847);transform-origin:0 0;">Character Styles</div>
<div class="a" style="left:775px;top:224px;width:164px;height:22px;background:#3e3e3e;border:1px solid #555"></div>
<div class="a" style="left:922px;top:225px;width:1px;height:20px;background:#4d4d4d"></div>
<div class="t" style="left:778.20px;top:230.55px;font-size:9.16px;font-weight:normal;color:#e6e6e6;font-family:'Liberation Sans';font-style:normal;transform:scaleX(0.851);transform-origin:0 0;">(Mixed)</div>
<svg class="a" style="left:926px;top:233px" width="9" height="6"><path d="M1.7,1.3L4.5,3.9L7.3,1.3" fill="none" stroke="#d8d8d8" stroke-width="1.1"/></svg>
<div class="a" style="left:857px;top:251px;width:82px;height:15px;background:#4b4b4b;border:1px solid #5f5f5f;border-radius:2px"></div>
<div class="t" style="left:877.50px;top:254.67px;font-size:9.01px;font-weight:normal;color:#e6e6e6;font-family:'Liberation Sans';font-style:normal;transform:scaleX(0.837);transform-origin:0 0;">Create Style</div>
<svg class="a" style="left:0;top:0" width="960" height="540"><rect x="775.5" y="297.5" width="13" height="12" fill="#fff" stroke="#777" stroke-width="0.6"/><path d="M776,309L788.5,297.5" stroke="#e01010" stroke-width="1.5"/><rect x="775.5" y="316.5" width="13" height="12" fill="#fff" stroke="#777" stroke-width="0.6"/><rect x="778.5" y="319" width="7" height="7" fill="#555"/><path d="M776,328L788.5,316.5" stroke="#e01010" stroke-width="1.5"/><path d="M780,338.2H784.5M780,346.8H784.5M777.8,340.5V344.5M786.8,340.5V344.5" stroke="#9ab4d8" stroke-width="0.8" stroke-dasharray="1.2,1"/><rect x="776.3" y="336.6" width="3" height="3" fill="#2f8df0"/><rect x="785.3" y="336.6" width="3" height="3" fill="#2f8df0"/><rect x="776.3" y="345.3" width="3" height="3" fill="#2f8df0"/><rect x="785.3" y="345.3" width="3" height="3" fill="#2f8df0"/><g fill="#e0e0e0"><rect x="776" y="355" width="2" height="2"/><rect x="776" y="359" width="2" height="2"/><rect x="776" y="363" width="2" height="2"/><rect x="778" y="357" width="2" height="2"/><rect x="778" y="361" width="2" height="2"/><rect x="778" y="365" width="2" height="2"/><rect x="780" y="355" width="2" height="2"/><rect x="780" y="359" width="2" height="2"/><rect x="780" y="363" width="2" height="2"/><rect x="782" y="357" width="2" height="2"/><rect x="782" y="361" width="2" height="2"/><rect x="782" y="365" width="2" height="2"/><rect x="784" y="355" width="2" height="2"/><rect x="784" y="359" width="2" height="2"/><rect x="784" y="363" width="2" height="2"/><rect x="786" y="357" width="2" height="2"/><rect x="786" y="361" width="2" height="2"/><rect x="786" y="365" width="2" height="2"/></g><rect x="775.5" y="354.5" width="12" height="12" fill="none" stroke="#aaa" stroke-width="0.5"/><rect x="778.5" y="380.5" width="8" height="7" fill="none" stroke="#cfcfcf" stroke-width="1" stroke-dasharray="1.5,1"/><rect x="788" y="387" width="1" height="1" fill="#cfcfcf"/></svg>
<div class="t" style="left:796.70px;top:300.16px;font-size:8.43px;font-weight:normal;color:#e6e6e6;font-family:'Liberation Sans';font-style:normal;transform:scaleX(0.782);transform-origin:0 0;">Fill</div>
<div class="t" style="left:796.70px;top:319.16px;font-size:8.43px;font-weight:normal;color:#dcdcdc;font-family:'Liberation Sans';font-style:normal;transform:scaleX(0.903);transform-origin:0 0;">Stroke</div>
<div class="t" style="left:796.70px;top:338.56px;font-size:8.43px;font-weight:normal;color:#dcdcdc;font-family:'Liberation Sans';font-style:normal;transform:scaleX(0.874);transform-origin:0 0;">Corner</div>
<div class="t" style="left:796.70px;top:358.06px;font-size:8.43px;font-weight:normal;color:#dcdcdc;font-family:'Liberation Sans';font-style:normal;transform:scaleX(0.857);transform-origin:0 0;">Opacity</div>
<div class="a" style="left:796.5px;top:328px;width:24px;height:1px;background:#bdbdbd"></div>
<div class="a" style="left:796.5px;top:347.5px;width:25px;height:1px;background:#bdbdbd"></div>
<div class="a" style="left:796.5px;top:367px;width:27px;height:1px;background:#bdbdbd"></div>
<div class="t" style="left:797px;top:377px;font-size:10px;font-style:italic;font-family:'Liberation Serif',serif;color:#d8d8d8">fx.</div>
<div class="a" style="left:843px;top:315px;width:12px;height:15px;background:#4d4d4d;border:1px solid #585858"></div><svg class="a" style="left:843px;top:315px" width="12" height="15"><path d="M3,5.2L6,2.6L9,5.2M3,9.8L6,12.4L9,9.8" fill="none" stroke="#a8a8a8" stroke-width="1"/></svg>
<div class="a" style="left:855px;top:315px;width:26px;height:15px;background:#474747;border:1px solid #5e5e5e"></div>
<div class="a" style="left:880px;top:315px;width:14px;height:15px;background:#3e3e3e;border:1px solid #5e5e5e"></div>
<svg class="a" style="left:883px;top:320px" width="9" height="6"><path d="M1.7,1.3L4.5,3.9L7.3,1.3" fill="none" stroke="#d8d8d8" stroke-width="1.1"/></svg>
<div class="a" style="left:899px;top:315px;width:28px;height:15px;background:#f0f0f0"></div>
<div class="a" style="left:903px;top:320px;width:20px;height:5px;background:#000"></div>
<div class="a" style="left:926px;top:315px;width:13px;height:15px;background:#3e3e3e;border:1px solid #5e5e5e"></div>
<svg class="a" style="left:928px;top:320px" width="9" height="6"><path d="M1.7,1.3L4.5,3.9L7.3,1.3" fill="none" stroke="#d8d8d8" stroke-width="1.1"/></svg>
<div class="a" style="left:843px;top:335px;width:12px;height:15px;background:#3b3b3b;border:1px solid #585858"></div><svg class="a" style="left:843px;top:335px" width="12" height="15"><path d="M3,5.2L6,2.6L9,5.2M3,9.8L6,12.4L9,9.8" fill="none" stroke="#e0e0e0" stroke-width="1"/></svg>
<div class="a" style="left:855px;top:335px;width:39px;height:15px;background:#3b3b3b;border:1px solid #5e5e5e"></div><div class="a" style="left:856px;top:336px;width:37px;height:13px;overflow:hidden"><div class="t" style="left:2.80px;top:1.74px;font-size:8.58px;font-weight:normal;color:#e8e8e8;font-family:'Liberation Sans';font-style:normal;transform:scaleX(0.86);transform-origin:0 0">4,233 mm</div></div>
<div class="a" style="left:899px;top:335px;width:28px;height:15px;background:#e4e4e4"></div>
<svg class="a" style="left:899px;top:335px" width="28" height="15"><path d="M2,3.5H24.5V14" fill="none" stroke="#000" stroke-width="1.4"/></svg>
<div class="a" style="left:926px;top:335px;width:13px;height:15px;background:#3e3e3e;border:1px solid #5e5e5e"></div>
<svg class="a" style="left:928px;top:340px" width="9" height="6"><path d="M1.7,1.3L4.5,3.9L7.3,1.3" fill="none" stroke="#d8d8d8" stroke-width="1.1"/></svg>
<div class="a" style="left:843px;top:355px;width:39px;height:15px;background:#3b3b3b;border:1px solid #5e5e5e"></div><div class="a" style="left:844px;top:356px;width:37px;height:13px;overflow:hidden"><div class="t" style="left:2.80px;top:1.74px;font-size:8.58px;font-weight:normal;color:#e8e8e8;font-family:'Liberation Sans';font-style:normal;transform:scaleX(0.86);transform-origin:0 0">100%</div></div>
<div class="a" style="left:881px;top:355px;width:13px;height:15px;background:#3e3e3e;border:1px solid #5e5e5e"></div>
<svg class="a" style="left:885px;top:358px" width="6" height="9"><path d="M1.5,1L4.5,4.5L1.5,8" fill="none" stroke="#d8d8d8" stroke-width="1.2"/></svg>
<div class="a" style="left:775px;top:421px;width:164px;height:15px;background:#3e3e3e;border:1px solid #555"></div>
<div class="a" style="left:926px;top:422px;width:1px;height:13px;background:#4d4d4d"></div>
<svg class="a" style="left:928px;top:426px" width="9" height="6"><path d="M1.7,1.3L4.5,3.9L7.3,1.3" fill="none" stroke="#d8d8d8" stroke-width="1.1"/></svg>
<svg class="a" style="left:777px;top:423px" width="14" height="11"><circle cx="7" cy="4.5" r="3.2" fill="none" stroke="#cfcfcf" stroke-width="1"/><path d="M4.6,6.8L1.5,9.8" stroke="#cfcfcf" stroke-width="1.3"/><path d="M9.5,8h3.5l-1.75,1.8z" fill="#cfcfcf"/></svg>
<div class="t" style="left:792.00px;top:423.97px;font-size:9.01px;font-weight:normal;color:#e6e6e6;font-family:'Liberation Sans';font-style:normal;transform:scaleX(0.866);transform-origin:0 0;">Arial</div>
<div class="a" style="left:775px;top:441px;width:164px;height:15px;background:#3e3e3e;border:1px solid #555"></div>
<div class="a" style="left:926px;top:442px;width:1px;height:13px;background:#4d4d4d"></div>
<svg class="a" style="left:928px;top:446px" width="9" height="6"><path d="M1.7,1.3L4.5,3.9L7.3,1.3" fill="none" stroke="#d8d8d8" stroke-width="1.1"/></svg>
<div class="t" style="left:778.60px;top:444.72px;font-size:8.72px;font-weight:normal;color:#e6e6e6;font-family:'Liberation Sans';font-style:normal;transform:scaleX(0.849);transform-origin:0 0;">Regular</div>
<div class="a" style="left:793px;top:460px;width:12px;height:15px;background:#4d4d4d;border:1px solid #585858"></div><svg class="a" style="left:793px;top:460px" width="12" height="15"><path d="M3,5.2L6,2.6L9,5.2M3,9.8L6,12.4L9,9.8" fill="none" stroke="#a8a8a8" stroke-width="1"/></svg>
<div class="a" style="left:805px;top:460px;width:34px;height:15px;background:#3b3b3b;border:1px solid #5e5e5e"></div>
<div class="a" style="left:838px;top:460px;width:13px;height:15px;background:#3e3e3e;border:1px solid #5e5e5e"></div>
<svg class="a" style="left:840px;top:465px" width="9" height="6"><path d="M1.7,1.3L4.5,3.9L7.3,1.3" fill="none" stroke="#d8d8d8" stroke-width="1.1"/></svg>
<div class="a" style="left:881px;top:460px;width:12px;height:15px;background:#4d4d4d;border:1px solid #585858"></div><svg class="a" style="left:881px;top:460px" width="12" height="15"><path d="M3,5.2L6,2.6L9,5.2M3,9.8L6,12.4L9,9.8" fill="none" stroke="#a8a8a8" stroke-width="1"/></svg>
<div class="a" style="left:892px;top:460px;width:35px;height:15px;background:#3b3b3b;border:1px solid #5e5e5e"></div>
<div class="a" style="left:926px;top:460px;width:13px;height:15px;background:#3e3e3e;border:1px solid #5e5e5e"></div>
<svg class="a" style="left:928px;top:465px" width="9" height="6"><path d="M1.7,1.3L4.5,3.9L7.3,1.3" fill="none" stroke="#d8d8d8" stroke-width="1.1"/></svg>
<div class="a" style="left:793px;top:480px;width:12px;height:15px;background:#4d4d4d;border:1px solid #585858"></div><svg class="a" style="left:793px;top:480px" width="12" height="15"><path d="M3,5.2L6,2.6L9,5.2M3,9.8L6,12.4L9,9.8" fill="none" stroke="#a8a8a8" stroke-width="1"/></svg>
<div class="a" style="left:805px;top:480px;width:34px;height:15px;background:#3b3b3b;border:1px solid #5e5e5e"></div><div class="a" style="left:806px;top:481px;width:32px;height:13px;overflow:hidden"><div class="t" style="left:2.80px;top:1.74px;font-size:8.58px;font-weight:normal;color:#e8e8e8;font-family:'Liberation Sans';font-style:normal;transform:scaleX(0.82);transform-origin:0 0">Metrics</div></div>
<div class="a" style="left:838px;top:480px;width:13px;height:15px;background:#3e3e3e;border:1px solid #5e5e5e"></div>
<svg class="a" style="left:840px;top:485px" width="9" height="6"><path d="M1.7,1.3L4.5,3.9L7.3,1.3" fill="none" stroke="#d8d8d8" stroke-width="1.1"/></svg>
<div class="a" style="left:881px;top:480px;width:12px;height:15px;background:#4d4d4d;border:1px solid #585858"></div><svg class="a" style="left:881px;top:480px" width="12" height="15"><path d="M3,5.2L6,2.6L9,5.2M3,9.8L6,12.4L9,9.8" fill="none" stroke="#a8a8a8" stroke-width="1"/></svg>
<div class="a" style="left:892px;top:480px;width:35px;height:15px;background:#3b3b3b;border:1px solid #5e5e5e"></div>
<div class="a" style="left:926px;top:480px;width:13px;height:15px;background:#3e3e3e;border:1px solid #5e5e5e"></div>
<svg class="a" style="left:928px;top:485px" width="9" height="6"><path d="M1.7,1.3L4.5,3.9L7.3,1.3" fill="none" stroke="#d8d8d8" stroke-width="1.1"/></svg>
<svg class="a" style="left:0;top:0" width="960" height="540"><path d="M775.5,466.2H781.5V467.6H779.2V472.6H780V473.2H777V472.6H777.8V467.6H775.5Z" fill="#d8d8d8"/><path d="M779.5,461.8H788.8V464.6H788L787.6,463.4H785.1V471.8H786.4V473.2H781.9V471.8H783.2V463.4H780.7L780.3,464.6H779.5Z" fill="#d8d8d8"/></svg>
<svg class="a" style="left:862px;top:459px" width="14" height="17"><path d="M7.5,1L4.5,7.5H10.5ZM7.5,8.5L4.5,15.5H10.5Z" fill="none" stroke="#d0d0d0" stroke-width="1"/><path d="M2,6V15M0.5,7.5L2,6L3.5,7.5M0.5,13.5L2,15L3.5,13.5" fill="none" stroke="#d0d0d0" stroke-width="0.9"/></svg>
<svg class="a" style="left:774px;top:480px" width="16" height="15"><path d="M1,1L4,9L7,1M5.5,9L8.5,1L11.5,9M7,6.5H10" fill="none" stroke="#d0d0d0" stroke-width="1"/><path d="M6,12.5H13M6,12.5L8,11M6,12.5L8,14" fill="none" stroke="#d0d0d0" stroke-width="0.9"/></svg>
<svg class="a" style="left:863px;top:480px" width="15" height="15"><rect x="1" y="1" width="13" height="9" fill="#d0d0d0"/><path d="M2.5,2L5,9L7.5,2M6.5,9L9,2L11.5,9" fill="none" stroke="#535353" stroke-width="1"/><path d="M1,12.5H14M1,12.5L3,11M1,12.5L3,14M14,12.5L12,11M14,12.5L12,14" fill="none" stroke="#d0d0d0" stroke-width="0.9"/></svg>
<div class="a" style="left:956px;top:52px;width:4px;height:488px;background:#4a4a4a;border-left:1.5px solid #3a3a3a"></div>
<div class="a" style="left:767px;top:536px;width:193px;height:4px;background:#3c3c3c"></div>
</body></html>
